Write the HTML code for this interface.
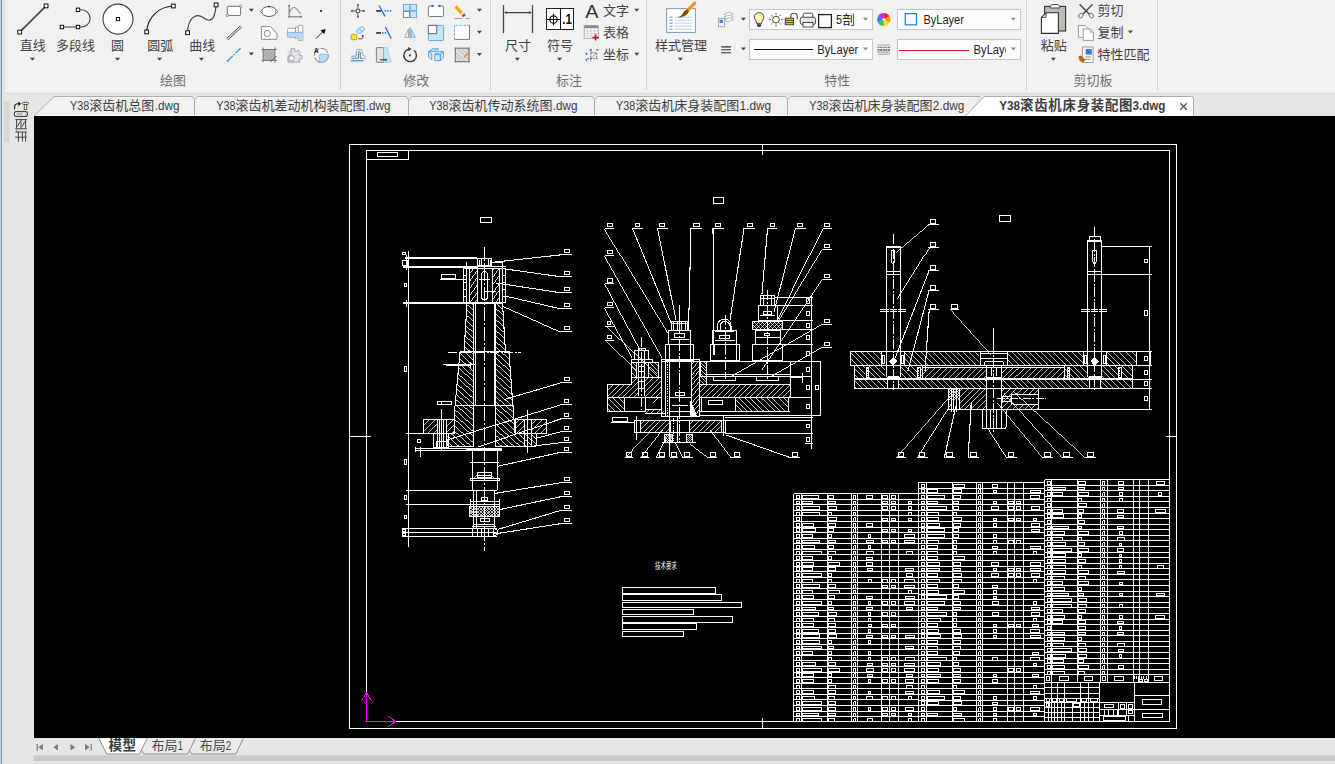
<!DOCTYPE html><html lang="zh-CN"><head><meta charset="utf-8"><title>Y38滚齿机床身装配图3.dwg</title><style>
html,body{margin:0;padding:0;background:#e6e6e6;}
body{width:1335px;height:764px;overflow:hidden;position:relative;font-family:"Liberation Sans","Noto Sans CJK SC",sans-serif;}
#app{position:absolute;left:0;top:0;width:1335px;height:764px;background:#e6e6e6;overflow:hidden;}
#edge{position:absolute;left:0;top:0;width:2px;height:764px;background:#b5d3f3;border-right:1px solid #8b8f94;box-sizing:border-box;}
#ribbon{position:absolute;left:4px;top:0;width:1331px;height:94px;background:#f1f1f1;border-left:1px solid #dcdcdc;border-bottom:1px solid #d9d9d9;box-sizing:border-box;}
#tabbar{position:absolute;left:2px;top:94px;width:1333px;height:22px;background:#e6e6e6;}
#canvas{position:absolute;left:34px;top:116px;width:1301px;height:622.4px;background:#000;}
#status{position:absolute;left:2px;top:738.4px;width:1333px;height:25.6px;background:#e6e6e6;}
svg.ov{position:absolute;left:0;top:0;}
svg text{font-family:"Liberation Sans","Noto Sans CJK SC",sans-serif;}
</style></head><body><div id="app"><div id="edge"></div><div id="ribbon"></div><div id="tabbar"></div><div id="canvas"></div><div id="status"></div><svg class="ov" width="1335" height="764" viewBox="0 0 1335 764"><g id="cad"><g fill="none" stroke="#fff" stroke-width="1" shape-rendering="crispEdges"><path d="M349.5 144.5H1176.5V728.5H349.5ZM366.5 150.5H1169.5V721.5H366.5ZM366.5 150.5H408.5V159.5H366.5ZM377.5 152.5H397.5V156.5H377.5ZM762.5 144.5L762.5 155M762.5 718L762.5 728.5M349.5 436.5L371 436.5M1165.5 436.5L1176.5 436.5M793.5 493.5L918.5 493.5M793.5 499.1L918.5 499.1M793.5 504.7L918.5 504.7M793.5 510.2L918.5 510.2M793.5 515.8L918.5 515.8M793.5 521.4L918.5 521.4M793.5 527L918.5 527M793.5 532.6L918.5 532.6M793.5 538.1L918.5 538.1M793.5 543.7L918.5 543.7M793.5 549.3L918.5 549.3M793.5 554.9L918.5 554.9M793.5 560.4L918.5 560.4M793.5 566L918.5 566M793.5 571.6L918.5 571.6M793.5 577.2L918.5 577.2M793.5 582.8L918.5 582.8M793.5 588.3L918.5 588.3M793.5 593.9L918.5 593.9M793.5 599.5L918.5 599.5M793.5 605.1L918.5 605.1M793.5 610.7L918.5 610.7M793.5 616.2L918.5 616.2M793.5 621.8L918.5 621.8M793.5 627.4L918.5 627.4M793.5 633L918.5 633M793.5 638.6L918.5 638.6M793.5 644.1L918.5 644.1M793.5 649.7L918.5 649.7M793.5 655.3L918.5 655.3M793.5 660.9L918.5 660.9M793.5 666.4L918.5 666.4M793.5 672L918.5 672M793.5 677.6L918.5 677.6M793.5 683.2L918.5 683.2M793.5 688.8L918.5 688.8M793.5 694.3L918.5 694.3M793.5 699.9L918.5 699.9M793.5 705.5L918.5 705.5M793.5 711.1L918.5 711.1M793.5 716.7L918.5 716.7M793.5 493.5L793.5 721.5M801.5 493.5L801.5 721.5M827.5 493.5L827.5 721.5M851.5 493.5L851.5 721.5M857.5 493.5L857.5 721.5M881.5 493.5L881.5 721.5M889.5 493.5L889.5 721.5M898.5 493.5L898.5 721.5M918.5 493.5L918.5 721.5M796.5 495.4H799.9V498.3H796.5ZM802.9 495.4H818.5V498.3H802.9ZM828.5 495.4H833.3V498.3H828.5ZM853.5 499.1L853.5 495.4M853.5 495.4L855.9 495.4M855.9 495.4L855.9 499.1M866.5 495.7H872.5V498.3H866.5ZM882.9 495.7H887.1V498.3H882.9ZM891.1 495.7H895.9V498.3H891.1ZM796.5 501H799.9V503.9H796.5ZM802.9 501H812V503.9H802.9ZM828.5 501H835.7V503.9H828.5ZM853.5 504.7L853.5 501M853.5 501L855.9 501M855.9 501L855.9 504.7M908 501.3H911V503.9H908ZM882.9 501.3H887.1V503.9H882.9ZM891.1 501.3H895.9V503.9H891.1ZM796.5 506.6H799.9V509.5H796.5ZM802.9 506.6H819.8V509.5H802.9ZM828.5 506.6H836.9V509.5H828.5ZM853.5 510.2L853.5 506.6M853.5 506.6L855.9 506.6M855.9 506.6L855.9 510.2M908 506.9H911V509.5H908ZM882.9 506.9H887.1V509.5H882.9ZM891.1 506.9H895.9V509.5H891.1ZM796.5 512.1H799.9V515H796.5ZM802.9 512.1H819.8V515H802.9ZM828.5 512.1H831.4V515H828.5ZM853.5 515.8L853.5 512.1M853.5 512.1L855.9 512.1M855.9 512.1L855.9 515.8M908 512.4H911V515H908ZM796.5 517.7H799.9V520.6H796.5ZM828.5 517.7H836.9V520.6H828.5ZM853.5 521.4L853.5 517.7M853.5 517.7L855.9 517.7M855.9 517.7L855.9 521.4M908 518H911V520.6H908ZM882.9 518H887.1V520.6H882.9ZM891.1 518H895.9V520.6H891.1ZM796.5 523.3H799.9V526.2H796.5ZM802.9 523.3H813.3V526.2H802.9ZM828.5 523.3H835.7V526.2H828.5ZM853.5 527L853.5 523.3M853.5 523.3L855.9 523.3M855.9 523.3L855.9 527M866.5 523.6H872.5V526.2H866.5ZM796.5 528.9H799.9V531.8H796.5ZM802.9 528.9H815.9V531.8H802.9ZM828.5 528.9H833.3V531.8H828.5ZM853.5 532.6L853.5 528.9M853.5 528.9L855.9 528.9M855.9 528.9L855.9 532.6M908 529.2H911V531.8H908ZM882.9 529.2H887.1V531.8H882.9ZM891.1 529.2H895.9V531.8H891.1ZM796.5 534.5H799.9V537.4H796.5ZM802.9 534.5H812V537.4H802.9ZM828.5 534.5H831.4V537.4H828.5ZM853.5 538.1L853.5 534.5M853.5 534.5L855.9 534.5M855.9 534.5L855.9 538.1M868.2 534.8H870.8V537.4H868.2ZM904.5 534.8H914.5V537.4H904.5ZM796.5 540H799.9V542.9H796.5ZM802.9 540H819.8V542.9H802.9ZM828.5 540H835.7V542.9H828.5ZM853.5 543.7L853.5 540M853.5 540L855.9 540M855.9 540L855.9 543.7M866 540.3H873V542.9H866ZM904.5 540.3H914.5V542.9H904.5ZM882.9 540.3H887.1V542.9H882.9ZM891.1 540.3H895.9V542.9H891.1ZM796.5 545.6H799.9V548.5H796.5ZM802.9 545.6H814.6V548.5H802.9ZM828.5 545.6H833.3V548.5H828.5ZM853.5 549.3L853.5 545.6M853.5 545.6L855.9 545.6M855.9 545.6L855.9 549.3M868.2 545.9H870.8V548.5H868.2ZM796.5 551.2H799.9V554.1H796.5ZM802.9 551.2H821.6V554.1H802.9ZM828.5 551.2H835.7V554.1H828.5ZM853.5 554.9L853.5 551.2M853.5 551.2L855.9 551.2M855.9 551.2L855.9 554.9M866 551.5H873V554.1H866ZM906.5 551.5H912.5V554.1H906.5ZM796.5 556.8H799.9V559.7H796.5ZM802.9 556.8H812V559.7H802.9ZM828.5 556.8H831.4V559.7H828.5ZM853.5 560.4L853.5 556.8M853.5 556.8L855.9 556.8M855.9 556.8L855.9 560.4M866.5 557.1H872.5V559.7H866.5ZM796.5 562.3H799.9V565.2H796.5ZM802.9 562.3H813.3V565.2H802.9ZM828.5 562.3H839.3V565.2H828.5ZM853.5 566L853.5 562.3M853.5 562.3L855.9 562.3M855.9 562.3L855.9 566M866.5 562.6H872.5V565.2H866.5ZM796.5 567.9H799.9V570.8H796.5ZM802.9 567.9H812V570.8H802.9ZM828.5 567.9H835.7V570.8H828.5ZM853.5 571.6L853.5 567.9M853.5 567.9L855.9 567.9M855.9 567.9L855.9 571.6M867 568.2H872V570.8H867ZM905.5 568.2H913.5V570.8H905.5ZM796.5 573.5H799.9V576.4H796.5ZM802.9 573.5H821.6V576.4H802.9ZM828.5 573.5H831.4V576.4H828.5ZM853.5 577.2L853.5 573.5M853.5 573.5L855.9 573.5M855.9 573.5L855.9 577.2M906.5 573.8H912.5V576.4H906.5ZM796.5 579.1H799.9V582H796.5ZM802.9 579.1H812V582H802.9ZM828.5 579.1H831.4V582H828.5ZM853.5 582.8L853.5 579.1M853.5 579.1L855.9 579.1M855.9 579.1L855.9 582.8M868 579.4H871V582H868ZM904.5 579.4H914.5V582H904.5ZM882.9 579.4H887.1V582H882.9ZM891.1 579.4H895.9V582H891.1ZM796.5 584.7H799.9V587.6H796.5ZM802.9 584.7H819.8V587.6H802.9ZM828.5 584.7H835.7V587.6H828.5ZM853.5 588.3L853.5 584.7M853.5 584.7L855.9 584.7M855.9 584.7L855.9 588.3M904.5 585H914.5V587.6H904.5ZM882.9 585H887.1V587.6H882.9ZM891.1 585H895.9V587.6H891.1ZM796.5 590.2H799.9V593.1H796.5ZM802.9 590.2H812V593.1H802.9ZM828.5 590.2H839.3V593.1H828.5ZM853.5 593.9L853.5 590.2M853.5 590.2L855.9 590.2M855.9 590.2L855.9 593.9M908 590.5H911V593.1H908ZM796.5 595.8H799.9V598.7H796.5ZM802.9 595.8H813.3V598.7H802.9ZM828.5 595.8H834.5V598.7H828.5ZM853.5 599.5L853.5 595.8M853.5 595.8L855.9 595.8M855.9 595.8L855.9 599.5M866.5 596.1H872.5V598.7H866.5ZM905 596.1H914V598.7H905ZM796.5 601.4H799.9V604.3H796.5ZM802.9 601.4H821.6V604.3H802.9ZM828.5 601.4H831.4V604.3H828.5ZM853.5 605.1L853.5 601.4M853.5 601.4L855.9 601.4M855.9 601.4L855.9 605.1M868.2 601.7H870.8V604.3H868.2ZM904.5 601.7H914.5V604.3H904.5ZM882.9 601.7H887.1V604.3H882.9ZM891.1 601.7H895.9V604.3H891.1ZM796.5 607H799.9V609.9H796.5ZM802.9 607H815.9V609.9H802.9ZM828.5 607H833.3V609.9H828.5ZM853.5 610.7L853.5 607M853.5 607L855.9 607M855.9 607L855.9 610.7M866.5 607.3H872.5V609.9H866.5ZM906.5 607.3H912.5V609.9H906.5ZM796.5 612.6H799.9V615.5H796.5ZM802.9 612.6H818.5V615.5H802.9ZM828.5 612.6H836.9V615.5H828.5ZM853.5 616.2L853.5 612.6M853.5 612.6L855.9 612.6M855.9 612.6L855.9 616.2M868.2 612.9H870.8V615.5H868.2ZM882.9 612.9H887.1V615.5H882.9ZM891.1 612.9H895.9V615.5H891.1ZM796.5 618.1H799.9V621H796.5ZM802.9 618.1H813.3V621H802.9ZM828.5 618.1H834.5V621H828.5ZM853.5 621.8L853.5 618.1M853.5 618.1L855.9 618.1M855.9 618.1L855.9 621.8M868.2 618.4H870.8V621H868.2ZM796.5 623.7H799.9V626.6H796.5ZM802.9 623.7H813.3V626.6H802.9ZM828.5 623.7H835.7V626.6H828.5ZM853.5 627.4L853.5 623.7M853.5 623.7L855.9 623.7M855.9 623.7L855.9 627.4M868 624H871V626.6H868ZM882.9 624H887.1V626.6H882.9ZM891.1 624H895.9V626.6H891.1ZM796.5 629.3H799.9V632.2H796.5ZM802.9 629.3H818.5V632.2H802.9ZM828.5 629.3H835.7V632.2H828.5ZM853.5 633L853.5 629.3M853.5 629.3L855.9 629.3M855.9 629.3L855.9 633M868.2 629.6H870.8V632.2H868.2ZM796.5 634.9H799.9V637.8H796.5ZM802.9 634.9H819.8V637.8H802.9ZM828.5 634.9H836.9V637.8H828.5ZM853.5 638.6L853.5 634.9M853.5 634.9L855.9 634.9M855.9 634.9L855.9 638.6M866.5 635.2H872.5V637.8H866.5ZM905 635.2H914V637.8H905ZM882.9 635.2H887.1V637.8H882.9ZM891.1 635.2H895.9V637.8H891.1ZM796.5 640.5H799.9V643.4H796.5ZM802.9 640.5H819.8V643.4H802.9ZM828.5 640.5H831.4V643.4H828.5ZM853.5 644.1L853.5 640.5M853.5 640.5L855.9 640.5M855.9 640.5L855.9 644.1M868.2 640.8H870.8V643.4H868.2ZM796.5 646H799.9V648.9H796.5ZM802.9 646H821.6V648.9H802.9ZM828.5 646H833.3V648.9H828.5ZM853.5 649.7L853.5 646M853.5 646L855.9 646M855.9 646L855.9 649.7M905.5 646.3H913.5V648.9H905.5ZM796.5 651.6H799.9V654.5H796.5ZM802.9 651.6H812V654.5H802.9ZM828.5 651.6H831.4V654.5H828.5ZM853.5 655.3L853.5 651.6M853.5 651.6L855.9 651.6M855.9 651.6L855.9 655.3M868.2 651.9H870.8V654.5H868.2ZM796.5 657.2H799.9V660.1H796.5ZM828.5 657.2H831.4V660.1H828.5ZM853.5 660.9L853.5 657.2M853.5 657.2L855.9 657.2M855.9 657.2L855.9 660.9M868.2 657.5H870.8V660.1H868.2ZM905 657.5H914V660.1H905ZM882.9 657.5H887.1V660.1H882.9ZM891.1 657.5H895.9V660.1H891.1ZM796.5 662.8H799.9V665.7H796.5ZM802.9 662.8H815.9V665.7H802.9ZM828.5 662.8H835.7V665.7H828.5ZM853.5 666.4L853.5 662.8M853.5 662.8L855.9 662.8M855.9 662.8L855.9 666.4M867 663.1H872V665.7H867ZM904.5 663.1H914.5V665.7H904.5ZM882.9 663.1H887.1V665.7H882.9ZM891.1 663.1H895.9V665.7H891.1ZM796.5 668.3H799.9V671.2H796.5ZM802.9 668.3H821.6V671.2H802.9ZM828.5 668.3H839.3V671.2H828.5ZM853.5 672L853.5 668.3M853.5 668.3L855.9 668.3M855.9 668.3L855.9 672M866 668.6H873V671.2H866ZM904.5 668.6H914.5V671.2H904.5ZM882.9 668.6H887.1V671.2H882.9ZM891.1 668.6H895.9V671.2H891.1ZM796.5 673.9H799.9V676.8H796.5ZM802.9 673.9H813.3V676.8H802.9ZM828.5 673.9H831.4V676.8H828.5ZM853.5 677.6L853.5 673.9M853.5 673.9L855.9 673.9M855.9 673.9L855.9 677.6M867 674.2H872V676.8H867ZM906.5 674.2H912.5V676.8H906.5ZM796.5 679.5H799.9V682.4H796.5ZM802.9 679.5H813.3V682.4H802.9ZM828.5 679.5H831.4V682.4H828.5ZM853.5 683.2L853.5 679.5M853.5 679.5L855.9 679.5M855.9 679.5L855.9 683.2M868.2 679.8H870.8V682.4H868.2ZM905.5 679.8H913.5V682.4H905.5ZM882.9 679.8H887.1V682.4H882.9ZM891.1 679.8H895.9V682.4H891.1ZM796.5 685.1H799.9V688H796.5ZM828.5 685.1H835.7V688H828.5ZM853.5 688.8L853.5 685.1M853.5 685.1L855.9 685.1M855.9 685.1L855.9 688.8M906.5 685.4H912.5V688H906.5ZM796.5 690.7H799.9V693.6H796.5ZM802.9 690.7H813.3V693.6H802.9ZM828.5 690.7H835.7V693.6H828.5ZM853.5 694.3L853.5 690.7M853.5 690.7L855.9 690.7M855.9 690.7L855.9 694.3M868.2 691H870.8V693.6H868.2ZM905.5 691H913.5V693.6H905.5ZM796.5 696.2H799.9V699.1H796.5ZM802.9 696.2H814.6V699.1H802.9ZM828.5 696.2H834.5V699.1H828.5ZM853.5 699.9L853.5 696.2M853.5 696.2L855.9 696.2M855.9 696.2L855.9 699.9M866.5 696.5H872.5V699.1H866.5ZM908 696.5H911V699.1H908ZM882.9 696.5H887.1V699.1H882.9ZM891.1 696.5H895.9V699.1H891.1ZM796.5 701.8H799.9V704.7H796.5ZM802.9 701.8H821.6V704.7H802.9ZM828.5 701.8H835.7V704.7H828.5ZM853.5 705.5L853.5 701.8M853.5 701.8L855.9 701.8M855.9 701.8L855.9 705.5M796.5 707.4H799.9V710.3H796.5ZM802.9 707.4H821.6V710.3H802.9ZM828.5 707.4H835.7V710.3H828.5ZM853.5 711.1L853.5 707.4M853.5 707.4L855.9 707.4M855.9 707.4L855.9 711.1M868.2 707.7H870.8V710.3H868.2ZM905.5 707.7H913.5V710.3H905.5ZM882.9 707.7H887.1V710.3H882.9ZM891.1 707.7H895.9V710.3H891.1ZM796.5 713H799.9V715.9H796.5ZM802.9 713H818.5V715.9H802.9ZM828.5 713H835.7V715.9H828.5ZM853.5 716.7L853.5 713M853.5 713L855.9 713M855.9 713L855.9 716.7M908 713.3H911V715.9H908ZM882.9 713.3H887.1V715.9H882.9ZM891.1 713.3H895.9V715.9H891.1ZM796.5 718.6H799.9V721.5H796.5ZM802.9 718.6H821.6V721.5H802.9ZM828.5 718.6H834.5V721.5H828.5ZM853.5 722.2L853.5 718.6M853.5 718.6L855.9 718.6M855.9 718.6L855.9 722.2M867 718.9H872V721.5H867ZM908 718.9H911V721.5H908ZM918.5 482.4L1044.5 482.4M918.5 488L1044.5 488M918.5 493.6L1044.5 493.6M918.5 499.1L1044.5 499.1M918.5 504.7L1044.5 504.7M918.5 510.3L1044.5 510.3M918.5 515.9L1044.5 515.9M918.5 521.5L1044.5 521.5M918.5 527L1044.5 527M918.5 532.6L1044.5 532.6M918.5 538.2L1044.5 538.2M918.5 543.8L1044.5 543.8M918.5 549.3L1044.5 549.3M918.5 554.9L1044.5 554.9M918.5 560.5L1044.5 560.5M918.5 566.1L1044.5 566.1M918.5 571.7L1044.5 571.7M918.5 577.2L1044.5 577.2M918.5 582.8L1044.5 582.8M918.5 588.4L1044.5 588.4M918.5 594L1044.5 594M918.5 599.6L1044.5 599.6M918.5 605.1L1044.5 605.1M918.5 610.7L1044.5 610.7M918.5 616.3L1044.5 616.3M918.5 621.9L1044.5 621.9M918.5 627.5L1044.5 627.5M918.5 633L1044.5 633M918.5 638.6L1044.5 638.6M918.5 644.2L1044.5 644.2M918.5 649.8L1044.5 649.8M918.5 655.3L1044.5 655.3M918.5 660.9L1044.5 660.9M918.5 666.5L1044.5 666.5M918.5 672.1L1044.5 672.1M918.5 677.7L1044.5 677.7M918.5 683.2L1044.5 683.2M918.5 688.8L1044.5 688.8M918.5 694.4L1044.5 694.4M918.5 700L1044.5 700M918.5 705.6L1044.5 705.6M918.5 711.1L1044.5 711.1M918.5 716.7L1044.5 716.7M918.5 482.4L918.5 721.5M926.5 482.4L926.5 721.5M952.5 482.4L952.5 721.5M976.5 482.4L976.5 721.5M982.5 482.4L982.5 721.5M1007.5 482.4L1007.5 721.5M1014.5 482.4L1014.5 721.5M1023.5 482.4L1023.5 721.5M1044.5 482.4L1044.5 721.5M921.5 484.3H924.9V487.2H921.5ZM953.5 484.3H964.3V487.2H953.5ZM978.5 488L978.5 484.3M978.5 484.3L980.9 484.3M980.9 484.3L980.9 488M992.5 484.6H997.5V487.2H992.5ZM921.5 489.9H924.9V492.8H921.5ZM927.9 489.9H937V492.8H927.9ZM953.5 489.9H961.9V492.8H953.5ZM978.5 493.6L978.5 489.9M978.5 489.9L980.9 489.9M980.9 489.9L980.9 493.6M993.7 490.2H996.3V492.8H993.7ZM1030 490.2H1040V492.8H1030ZM921.5 495.5H924.9V498.4H921.5ZM927.9 495.5H944.8V498.4H927.9ZM953.5 495.5H960.7V498.4H953.5ZM978.5 499.1L978.5 495.5M978.5 495.5L980.9 495.5M980.9 495.5L980.9 499.1M1030.5 495.8H1039.5V498.4H1030.5ZM921.5 501H924.9V503.9H921.5ZM927.9 501H937V503.9H927.9ZM953.5 501H958.3V503.9H953.5ZM978.5 504.7L978.5 501M978.5 501L980.9 501M980.9 501L980.9 504.7M993.7 501.3H996.3V503.9H993.7ZM1008.9 501.3H1013.1V503.9H1008.9ZM1016.1 501.3H1020.9V503.9H1016.1ZM921.5 506.6H924.9V509.5H921.5ZM927.9 506.6H946.6V509.5H927.9ZM953.5 506.6H958.3V509.5H953.5ZM978.5 510.3L978.5 506.6M978.5 506.6L980.9 506.6M980.9 506.6L980.9 510.3M991.5 506.9H998.5V509.5H991.5ZM1031 506.9H1039V509.5H1031ZM1008.9 506.9H1013.1V509.5H1008.9ZM1016.1 506.9H1020.9V509.5H1016.1ZM921.5 512.2H924.9V515.1H921.5ZM927.9 512.2H938.3V515.1H927.9ZM953.5 512.2H956.4V515.1H953.5ZM978.5 515.9L978.5 512.2M978.5 512.2L980.9 512.2M980.9 512.2L980.9 515.9M921.5 517.8H924.9V520.7H921.5ZM927.9 517.8H938.3V520.7H927.9ZM953.5 517.8H961.9V520.7H953.5ZM978.5 521.5L978.5 517.8M978.5 517.8L980.9 517.8M980.9 517.8L980.9 521.5M993.7 518.1H996.3V520.7H993.7ZM1033.5 518.1H1036.5V520.7H1033.5ZM1008.9 518.1H1013.1V520.7H1008.9ZM1016.1 518.1H1020.9V520.7H1016.1ZM921.5 523.4H924.9V526.3H921.5ZM927.9 523.4H939.6V526.3H927.9ZM953.5 523.4H960.7V526.3H953.5ZM978.5 527L978.5 523.4M978.5 523.4L980.9 523.4M980.9 523.4L980.9 527M993.7 523.7H996.3V526.3H993.7ZM1031 523.7H1039V526.3H1031ZM921.5 528.9H924.9V531.8H921.5ZM927.9 528.9H944.8V531.8H927.9ZM953.5 528.9H958.3V531.8H953.5ZM978.5 532.6L978.5 528.9M978.5 528.9L980.9 528.9M980.9 528.9L980.9 532.6M1031 529.2H1039V531.8H1031ZM921.5 534.5H924.9V537.4H921.5ZM927.9 534.5H944.8V537.4H927.9ZM953.5 534.5H958.3V537.4H953.5ZM978.5 538.2L978.5 534.5M978.5 534.5L980.9 534.5M980.9 534.5L980.9 538.2M993.7 534.8H996.3V537.4H993.7ZM921.5 540.1H924.9V543H921.5ZM927.9 540.1H938.3V543H927.9ZM953.5 540.1H956.4V543H953.5ZM978.5 543.8L978.5 540.1M978.5 540.1L980.9 540.1M980.9 540.1L980.9 543.8M993.7 540.4H996.3V543H993.7ZM1008.9 540.4H1013.1V543H1008.9ZM1016.1 540.4H1020.9V543H1016.1ZM921.5 545.7H924.9V548.6H921.5ZM927.9 545.7H937V548.6H927.9ZM953.5 545.7H956.4V548.6H953.5ZM978.5 549.3L978.5 545.7M978.5 545.7L980.9 545.7M980.9 545.7L980.9 549.3M992.5 546H997.5V548.6H992.5ZM1030 546H1040V548.6H1030ZM921.5 551.2H924.9V554.1H921.5ZM927.9 551.2H937V554.1H927.9ZM953.5 551.2H956.4V554.1H953.5ZM978.5 554.9L978.5 551.2M978.5 551.2L980.9 551.2M980.9 551.2L980.9 554.9M993.7 551.5H996.3V554.1H993.7ZM1033.5 551.5H1036.5V554.1H1033.5ZM921.5 556.8H924.9V559.7H921.5ZM927.9 556.8H937V559.7H927.9ZM953.5 556.8H964.3V559.7H953.5ZM978.5 560.5L978.5 556.8M978.5 556.8L980.9 556.8M980.9 556.8L980.9 560.5M921.5 562.4H924.9V565.3H921.5ZM927.9 562.4H939.6V565.3H927.9ZM953.5 562.4H960.7V565.3H953.5ZM978.5 566.1L978.5 562.4M978.5 562.4L980.9 562.4M980.9 562.4L980.9 566.1M991.5 562.7H998.5V565.3H991.5ZM1030 562.7H1040V565.3H1030ZM921.5 568H924.9V570.9H921.5ZM927.9 568H939.6V570.9H927.9ZM953.5 568H960.7V570.9H953.5ZM978.5 571.7L978.5 568M978.5 568L980.9 568M980.9 568L980.9 571.7M993.7 568.3H996.3V570.9H993.7ZM1030 568.3H1040V570.9H1030ZM1008.9 568.3H1013.1V570.9H1008.9ZM1016.1 568.3H1020.9V570.9H1016.1ZM921.5 573.6H924.9V576.5H921.5ZM927.9 573.6H937V576.5H927.9ZM953.5 573.6H961.9V576.5H953.5ZM978.5 577.2L978.5 573.6M978.5 573.6L980.9 573.6M980.9 573.6L980.9 577.2M991.5 573.9H998.5V576.5H991.5ZM1031 573.9H1039V576.5H1031ZM1008.9 573.9H1013.1V576.5H1008.9ZM1016.1 573.9H1020.9V576.5H1016.1ZM921.5 579.1H924.9V582H921.5ZM927.9 579.1H939.6V582H927.9ZM953.5 579.1H961.9V582H953.5ZM978.5 582.8L978.5 579.1M978.5 579.1L980.9 579.1M980.9 579.1L980.9 582.8M1033.5 579.4H1036.5V582H1033.5ZM921.5 584.7H924.9V587.6H921.5ZM927.9 584.7H937V587.6H927.9ZM953.5 584.7H958.3V587.6H953.5ZM978.5 588.4L978.5 584.7M978.5 584.7L980.9 584.7M980.9 584.7L980.9 588.4M992.5 585H997.5V587.6H992.5ZM921.5 590.3H924.9V593.2H921.5ZM927.9 590.3H938.3V593.2H927.9ZM953.5 590.3H964.3V593.2H953.5ZM978.5 594L978.5 590.3M978.5 590.3L980.9 590.3M980.9 590.3L980.9 594M993.7 590.6H996.3V593.2H993.7ZM921.5 595.9H924.9V598.8H921.5ZM927.9 595.9H946.6V598.8H927.9ZM953.5 595.9H958.3V598.8H953.5ZM978.5 599.6L978.5 595.9M978.5 595.9L980.9 595.9M980.9 595.9L980.9 599.6M993.7 596.2H996.3V598.8H993.7ZM921.5 601.5H924.9V604.4H921.5ZM927.9 601.5H944.8V604.4H927.9ZM953.5 601.5H960.7V604.4H953.5ZM978.5 605.1L978.5 601.5M978.5 601.5L980.9 601.5M980.9 601.5L980.9 605.1M992 601.8H998V604.4H992ZM1033.5 601.8H1036.5V604.4H1033.5ZM921.5 607H924.9V609.9H921.5ZM927.9 607H937V609.9H927.9ZM953.5 607H960.7V609.9H953.5ZM978.5 610.7L978.5 607M978.5 607L980.9 607M980.9 607L980.9 610.7M1031 607.3H1039V609.9H1031ZM921.5 612.6H924.9V615.5H921.5ZM927.9 612.6H946.6V615.5H927.9ZM953.5 612.6H956.4V615.5H953.5ZM978.5 616.3L978.5 612.6M978.5 612.6L980.9 612.6M980.9 612.6L980.9 616.3M992 612.9H998V615.5H992ZM1031 612.9H1039V615.5H1031ZM921.5 618.2H924.9V621.1H921.5ZM927.9 618.2H940.9V621.1H927.9ZM953.5 618.2H956.4V621.1H953.5ZM978.5 621.9L978.5 618.2M978.5 618.2L980.9 618.2M980.9 618.2L980.9 621.9M1033.5 618.5H1036.5V621.1H1033.5ZM921.5 623.8H924.9V626.7H921.5ZM927.9 623.8H937V626.7H927.9ZM953.5 623.8H956.4V626.7H953.5ZM978.5 627.5L978.5 623.8M978.5 623.8L980.9 623.8M980.9 623.8L980.9 627.5M993.5 624.1H996.5V626.7H993.5ZM1032 624.1H1038V626.7H1032ZM1008.9 624.1H1013.1V626.7H1008.9ZM1016.1 624.1H1020.9V626.7H1016.1ZM921.5 629.4H924.9V632.3H921.5ZM927.9 629.4H938.3V632.3H927.9ZM953.5 629.4H960.7V632.3H953.5ZM978.5 633L978.5 629.4M978.5 629.4L980.9 629.4M980.9 629.4L980.9 633M993.7 629.7H996.3V632.3H993.7ZM1030.5 629.7H1039.5V632.3H1030.5ZM921.5 634.9H924.9V637.8H921.5ZM927.9 634.9H940.9V637.8H927.9ZM953.5 634.9H961.9V637.8H953.5ZM978.5 638.6L978.5 634.9M978.5 634.9L980.9 634.9M980.9 634.9L980.9 638.6M993.7 635.2H996.3V637.8H993.7ZM1030 635.2H1040V637.8H1030ZM921.5 640.5H924.9V643.4H921.5ZM927.9 640.5H937V643.4H927.9ZM953.5 640.5H960.7V643.4H953.5ZM978.5 644.2L978.5 640.5M978.5 640.5L980.9 640.5M980.9 640.5L980.9 644.2M921.5 646.1H924.9V649H921.5ZM927.9 646.1H937V649H927.9ZM953.5 646.1H960.7V649H953.5ZM978.5 649.8L978.5 646.1M978.5 646.1L980.9 646.1M980.9 646.1L980.9 649.8M921.5 651.7H924.9V654.6H921.5ZM927.9 651.7H937V654.6H927.9ZM953.5 651.7H959.5V654.6H953.5ZM978.5 655.3L978.5 651.7M978.5 651.7L980.9 651.7M980.9 651.7L980.9 655.3M1032 652H1038V654.6H1032ZM921.5 657.2H924.9V660.1H921.5ZM927.9 657.2H946.6V660.1H927.9ZM953.5 657.2H956.4V660.1H953.5ZM978.5 660.9L978.5 657.2M978.5 657.2L980.9 657.2M980.9 657.2L980.9 660.9M992.5 657.5H997.5V660.1H992.5ZM1030.5 657.5H1039.5V660.1H1030.5ZM921.5 662.8H924.9V665.7H921.5ZM927.9 662.8H940.9V665.7H927.9ZM953.5 662.8H958.3V665.7H953.5ZM978.5 666.5L978.5 662.8M978.5 662.8L980.9 662.8M980.9 662.8L980.9 666.5M1033.5 663.1H1036.5V665.7H1033.5ZM921.5 668.4H924.9V671.3H921.5ZM927.9 668.4H938.3V671.3H927.9ZM953.5 668.4H960.7V671.3H953.5ZM978.5 672.1L978.5 668.4M978.5 668.4L980.9 668.4M980.9 668.4L980.9 672.1M1008.9 668.7H1013.1V671.3H1008.9ZM1016.1 668.7H1020.9V671.3H1016.1ZM921.5 674H924.9V676.9H921.5ZM927.9 674H940.9V676.9H927.9ZM953.5 674H960.7V676.9H953.5ZM978.5 677.7L978.5 674M978.5 674L980.9 674M980.9 674L980.9 677.7M993.7 674.3H996.3V676.9H993.7ZM1032 674.3H1038V676.9H1032ZM921.5 679.6H924.9V682.5H921.5ZM927.9 679.6H938.3V682.5H927.9ZM953.5 679.6H960.7V682.5H953.5ZM978.5 683.2L978.5 679.6M978.5 679.6L980.9 679.6M980.9 679.6L980.9 683.2M992.5 679.9H997.5V682.5H992.5ZM921.5 685.1H924.9V688H921.5ZM953.5 685.1H956.4V688H953.5ZM978.5 688.8L978.5 685.1M978.5 685.1L980.9 685.1M980.9 685.1L980.9 688.8M1033.5 685.4H1036.5V688H1033.5ZM921.5 690.7H924.9V693.6H921.5ZM927.9 690.7H939.6V693.6H927.9ZM953.5 690.7H964.3V693.6H953.5ZM978.5 694.4L978.5 690.7M978.5 690.7L980.9 690.7M980.9 690.7L980.9 694.4M1030.5 691H1039.5V693.6H1030.5ZM921.5 696.3H924.9V699.2H921.5ZM927.9 696.3H944.8V699.2H927.9ZM953.5 696.3H960.7V699.2H953.5ZM978.5 700L978.5 696.3M978.5 696.3L980.9 696.3M980.9 696.3L980.9 700M993.7 696.6H996.3V699.2H993.7ZM1033.5 696.6H1036.5V699.2H1033.5ZM921.5 701.9H924.9V704.8H921.5ZM927.9 701.9H938.3V704.8H927.9ZM953.5 701.9H961.9V704.8H953.5ZM978.5 705.6L978.5 701.9M978.5 701.9L980.9 701.9M980.9 701.9L980.9 705.6M992.5 702.2H997.5V704.8H992.5ZM921.5 707.5H924.9V710.4H921.5ZM953.5 707.5H956.4V710.4H953.5ZM978.5 711.1L978.5 707.5M978.5 707.5L980.9 707.5M980.9 707.5L980.9 711.1M993.5 707.8H996.5V710.4H993.5ZM1030.5 707.8H1039.5V710.4H1030.5ZM1008.9 707.8H1013.1V710.4H1008.9ZM1016.1 707.8H1020.9V710.4H1016.1ZM921.5 713H924.9V715.9H921.5ZM927.9 713H937V715.9H927.9ZM953.5 713H961.9V715.9H953.5ZM978.5 716.7L978.5 713M978.5 713L980.9 713M980.9 713L980.9 716.7M993.5 713.3H996.5V715.9H993.5ZM1033.5 713.3H1036.5V715.9H1033.5ZM921.5 718.6H924.9V721.5H921.5ZM953.5 718.6H964.3V721.5H953.5ZM978.5 722.3L978.5 718.6M978.5 718.6L980.9 718.6M980.9 718.6L980.9 722.3M993.7 718.9H996.3V721.5H993.7ZM1044.5 479.5L1169.5 479.5M1044.5 485.1L1169.5 485.1M1044.5 490.7L1169.5 490.7M1044.5 496.2L1169.5 496.2M1044.5 501.8L1169.5 501.8M1044.5 507.4L1169.5 507.4M1044.5 513L1169.5 513M1044.5 518.6L1169.5 518.6M1044.5 524.1L1169.5 524.1M1044.5 529.7L1169.5 529.7M1044.5 535.3L1169.5 535.3M1044.5 540.9L1169.5 540.9M1044.5 546.4L1169.5 546.4M1044.5 552L1169.5 552M1044.5 557.6L1169.5 557.6M1044.5 563.2L1169.5 563.2M1044.5 568.8L1169.5 568.8M1044.5 574.3L1169.5 574.3M1044.5 579.9L1169.5 579.9M1044.5 585.5L1169.5 585.5M1044.5 591.1L1169.5 591.1M1044.5 596.7L1169.5 596.7M1044.5 602.2L1169.5 602.2M1044.5 607.8L1169.5 607.8M1044.5 613.4L1169.5 613.4M1044.5 619L1169.5 619M1044.5 624.6L1169.5 624.6M1044.5 630.1L1169.5 630.1M1044.5 635.7L1169.5 635.7M1044.5 641.3L1169.5 641.3M1044.5 646.9L1169.5 646.9M1044.5 652.4L1169.5 652.4M1044.5 658L1169.5 658M1044.5 663.6L1169.5 663.6M1044.5 669.2L1169.5 669.2M1044.5 479.5L1044.5 674.8M1051.5 479.5L1051.5 674.8M1077.5 479.5L1077.5 674.8M1100.5 479.5L1100.5 674.8M1107.5 479.5L1107.5 674.8M1133.5 479.5L1133.5 674.8M1139.5 479.5L1139.5 674.8M1148.5 479.5L1148.5 674.8M1169.5 479.5L1169.5 674.8M1047.5 481.4H1050.9V484.3H1047.5ZM1078.5 481.4H1085.4V484.3H1078.5ZM1102.5 485.1L1102.5 481.4M1102.5 481.4L1104.9 481.4M1104.9 481.4L1104.9 485.1M1118 481.7H1123V484.3H1118ZM1156 481.7H1164V484.3H1156ZM1047.5 487H1050.9V489.9H1047.5ZM1052.9 487H1065.9V489.9H1052.9ZM1078.5 487H1084.2V489.9H1078.5ZM1102.5 490.7L1102.5 487M1102.5 487L1104.9 487M1104.9 487L1104.9 490.7M1118 487.3H1123V489.9H1118ZM1047.5 492.6H1050.9V495.5H1047.5ZM1052.9 492.6H1062V495.5H1052.9ZM1078.5 492.6H1088.8V495.5H1078.5ZM1102.5 496.2L1102.5 492.6M1102.5 492.6L1104.9 492.6M1104.9 492.6L1104.9 496.2M1119 492.9H1122V495.5H1119ZM1158.5 492.9H1161.5V495.5H1158.5ZM1047.5 498.1H1050.9V501H1047.5ZM1078.5 498.1H1081.3V501H1078.5ZM1102.5 501.8L1102.5 498.1M1102.5 498.1L1104.9 498.1M1104.9 498.1L1104.9 501.8M1119 498.4H1122V501H1119ZM1047.5 503.7H1050.9V506.6H1047.5ZM1078.5 503.7H1086.5V506.6H1078.5ZM1102.5 507.4L1102.5 503.7M1102.5 503.7L1104.9 503.7M1104.9 503.7L1104.9 507.4M1047.5 509.3H1050.9V512.2H1047.5ZM1052.9 509.3H1062V512.2H1052.9ZM1078.5 509.3H1083.1V512.2H1078.5ZM1102.5 513L1102.5 509.3M1102.5 509.3L1104.9 509.3M1104.9 509.3L1104.9 513M1117.5 509.6H1123.5V512.2H1117.5ZM1155 509.6H1165V512.2H1155ZM1047.5 514.9H1050.9V517.8H1047.5ZM1052.9 514.9H1063.3V517.8H1052.9ZM1078.5 514.9H1081.3V517.8H1078.5ZM1102.5 518.6L1102.5 514.9M1102.5 514.9L1104.9 514.9M1104.9 514.9L1104.9 518.6M1117.5 515.2H1123.5V517.8H1117.5ZM1047.5 520.5H1050.9V523.4H1047.5ZM1078.5 520.5H1084.2V523.4H1078.5ZM1102.5 524.1L1102.5 520.5M1102.5 520.5L1104.9 520.5M1104.9 520.5L1104.9 524.1M1047.5 526H1050.9V528.9H1047.5ZM1052.9 526H1068.5V528.9H1052.9ZM1078.5 526H1081.3V528.9H1078.5ZM1102.5 529.7L1102.5 526M1102.5 526L1104.9 526M1104.9 526L1104.9 529.7M1117.5 526.3H1123.5V528.9H1117.5ZM1047.5 531.6H1050.9V534.5H1047.5ZM1052.9 531.6H1064.6V534.5H1052.9ZM1078.5 531.6H1088.8V534.5H1078.5ZM1102.5 535.3L1102.5 531.6M1102.5 531.6L1104.9 531.6M1104.9 531.6L1104.9 535.3M1119 531.9H1122V534.5H1119ZM1047.5 537.2H1050.9V540.1H1047.5ZM1052.9 537.2H1062V540.1H1052.9ZM1078.5 537.2H1081.3V540.1H1078.5ZM1102.5 540.9L1102.5 537.2M1102.5 537.2L1104.9 537.2M1104.9 537.2L1104.9 540.9M1117 537.5H1124V540.1H1117ZM1047.5 542.8H1050.9V545.7H1047.5ZM1052.9 542.8H1065.9V545.7H1052.9ZM1078.5 542.8H1084.2V545.7H1078.5ZM1102.5 546.4L1102.5 542.8M1102.5 542.8L1104.9 542.8M1104.9 542.8L1104.9 546.4M1119.2 543.1H1121.8V545.7H1119.2ZM1047.5 548.3H1050.9V551.2H1047.5ZM1052.9 548.3H1071.6V551.2H1052.9ZM1078.5 548.3H1088.8V551.2H1078.5ZM1102.5 552L1102.5 548.3M1102.5 548.3L1104.9 548.3M1104.9 548.3L1104.9 552M1117.5 548.6H1123.5V551.2H1117.5ZM1047.5 553.9H1050.9V556.8H1047.5ZM1052.9 553.9H1065.9V556.8H1052.9ZM1078.5 553.9H1081.3V556.8H1078.5ZM1102.5 557.6L1102.5 553.9M1102.5 553.9L1104.9 553.9M1104.9 553.9L1104.9 557.6M1119.2 554.2H1121.8V556.8H1119.2ZM1047.5 559.5H1050.9V562.4H1047.5ZM1052.9 559.5H1065.9V562.4H1052.9ZM1078.5 559.5H1085.4V562.4H1078.5ZM1102.5 563.2L1102.5 559.5M1102.5 559.5L1104.9 559.5M1104.9 559.5L1104.9 563.2M1119.2 559.8H1121.8V562.4H1119.2ZM1047.5 565.1H1050.9V568H1047.5ZM1052.9 565.1H1065.9V568H1052.9ZM1078.5 565.1H1081.3V568H1078.5ZM1102.5 568.8L1102.5 565.1M1102.5 565.1L1104.9 565.1M1104.9 565.1L1104.9 568.8M1119.2 565.4H1121.8V568H1119.2ZM1157 565.4H1163V568H1157ZM1047.5 570.7H1050.9V573.6H1047.5ZM1052.9 570.7H1065.9V573.6H1052.9ZM1078.5 570.7H1088.8V573.6H1078.5ZM1102.5 574.3L1102.5 570.7M1102.5 570.7L1104.9 570.7M1104.9 570.7L1104.9 574.3M1117 571H1124V573.6H1117ZM1047.5 576.2H1050.9V579.1H1047.5ZM1052.9 576.2H1064.6V579.1H1052.9ZM1078.5 576.2H1085.4V579.1H1078.5ZM1102.5 579.9L1102.5 576.2M1102.5 576.2L1104.9 576.2M1104.9 576.2L1104.9 579.9M1047.5 581.8H1050.9V584.7H1047.5ZM1052.9 581.8H1062V584.7H1052.9ZM1078.5 581.8H1088.8V584.7H1078.5ZM1102.5 585.5L1102.5 581.8M1102.5 581.8L1104.9 581.8M1104.9 581.8L1104.9 585.5M1119 582.1H1122V584.7H1119ZM1047.5 587.4H1050.9V590.3H1047.5ZM1052.9 587.4H1064.6V590.3H1052.9ZM1078.5 587.4H1081.3V590.3H1078.5ZM1102.5 591.1L1102.5 587.4M1102.5 587.4L1104.9 587.4M1104.9 587.4L1104.9 591.1M1047.5 593H1050.9V595.9H1047.5ZM1052.9 593H1068.5V595.9H1052.9ZM1078.5 593H1083.1V595.9H1078.5ZM1102.5 596.7L1102.5 593M1102.5 593L1104.9 593M1104.9 593L1104.9 596.7M1119 593.3H1122V595.9H1119ZM1156 593.3H1164V595.9H1156ZM1047.5 598.6H1050.9V601.5H1047.5ZM1052.9 598.6H1071.6V601.5H1052.9ZM1078.5 598.6H1086.5V601.5H1078.5ZM1102.5 602.2L1102.5 598.6M1102.5 598.6L1104.9 598.6M1104.9 598.6L1104.9 602.2M1047.5 604.1H1050.9V607H1047.5ZM1052.9 604.1H1071.6V607H1052.9ZM1078.5 604.1H1086.5V607H1078.5ZM1102.5 607.8L1102.5 604.1M1102.5 604.1L1104.9 604.1M1104.9 604.1L1104.9 607.8M1119 604.4H1122V607H1119ZM1047.5 609.7H1050.9V612.6H1047.5ZM1052.9 609.7H1062V612.6H1052.9ZM1078.5 609.7H1085.4V612.6H1078.5ZM1102.5 613.4L1102.5 609.7M1102.5 609.7L1104.9 609.7M1104.9 609.7L1104.9 613.4M1047.5 615.3H1050.9V618.2H1047.5ZM1052.9 615.3H1064.6V618.2H1052.9ZM1078.5 615.3H1081.3V618.2H1078.5ZM1102.5 619L1102.5 615.3M1102.5 615.3L1104.9 615.3M1104.9 615.3L1104.9 619M1119 615.6H1122V618.2H1119ZM1155.5 615.6H1164.5V618.2H1155.5ZM1047.5 620.9H1050.9V623.8H1047.5ZM1052.9 620.9H1062V623.8H1052.9ZM1078.5 620.9H1085.4V623.8H1078.5ZM1102.5 624.6L1102.5 620.9M1102.5 620.9L1104.9 620.9M1104.9 620.9L1104.9 624.6M1117.5 621.2H1123.5V623.8H1117.5ZM1047.5 626.5H1050.9V629.4H1047.5ZM1078.5 626.5H1085.4V629.4H1078.5ZM1102.5 630.1L1102.5 626.5M1102.5 626.5L1104.9 626.5M1104.9 626.5L1104.9 630.1M1119.2 626.8H1121.8V629.4H1119.2ZM1047.5 632H1050.9V634.9H1047.5ZM1052.9 632H1064.6V634.9H1052.9ZM1078.5 632H1085.4V634.9H1078.5ZM1102.5 635.7L1102.5 632M1102.5 632L1104.9 632M1104.9 632L1104.9 635.7M1117.5 632.3H1123.5V634.9H1117.5ZM1047.5 637.6H1050.9V640.5H1047.5ZM1052.9 637.6H1064.6V640.5H1052.9ZM1078.5 637.6H1081.3V640.5H1078.5ZM1102.5 641.3L1102.5 637.6M1102.5 637.6L1104.9 637.6M1104.9 637.6L1104.9 641.3M1047.5 643.2H1050.9V646.1H1047.5ZM1052.9 643.2H1063.3V646.1H1052.9ZM1078.5 643.2H1085.4V646.1H1078.5ZM1102.5 646.9L1102.5 643.2M1102.5 643.2L1104.9 643.2M1104.9 643.2L1104.9 646.9M1117 643.5H1124V646.1H1117ZM1047.5 648.8H1050.9V651.7H1047.5ZM1052.9 648.8H1071.6V651.7H1052.9ZM1078.5 648.8H1086.5V651.7H1078.5ZM1102.5 652.4L1102.5 648.8M1102.5 648.8L1104.9 648.8M1104.9 648.8L1104.9 652.4M1118 649.1H1123V651.7H1118ZM1047.5 654.3H1050.9V657.2H1047.5ZM1052.9 654.3H1065.9V657.2H1052.9ZM1078.5 654.3H1086.5V657.2H1078.5ZM1102.5 658L1102.5 654.3M1102.5 654.3L1104.9 654.3M1104.9 654.3L1104.9 658M1119.2 654.6H1121.8V657.2H1119.2ZM1047.5 659.9H1050.9V662.8H1047.5ZM1052.9 659.9H1063.3V662.8H1052.9ZM1078.5 659.9H1083.1V662.8H1078.5ZM1102.5 663.6L1102.5 659.9M1102.5 659.9L1104.9 659.9M1104.9 659.9L1104.9 663.6M1047.5 665.5H1050.9V668.4H1047.5ZM1052.9 665.5H1064.6V668.4H1052.9ZM1078.5 665.5H1088.8V668.4H1078.5ZM1102.5 669.2L1102.5 665.5M1102.5 665.5L1104.9 665.5M1104.9 665.5L1104.9 669.2M1118 665.8H1123V668.4H1118ZM1047.5 671.1H1050.9V674H1047.5ZM1052.9 671.1H1064.6V674H1052.9ZM1078.5 671.1H1084.2V674H1078.5ZM1102.5 674.8L1102.5 671.1M1102.5 671.1L1104.9 671.1M1104.9 671.1L1104.9 674.8M1044.5 674.8L1169.5 674.8M1044.5 682.5L1169.5 682.5M1044.5 674.8L1044.5 682.5M1051.5 674.8L1051.5 682.5M1077.5 674.8L1077.5 682.5M1100.5 674.8L1100.5 682.5M1107.5 674.8L1107.5 682.5M1133.5 674.8L1133.5 682.5M1139.5 674.8L1139.5 682.5M1148.5 674.8L1148.5 682.5M1169.5 674.8L1169.5 682.5M1046.5 676.8H1049.5V680.6H1046.5ZM1059.5 676.8H1068.5V680.6H1059.5ZM1084.5 676.8H1092.5V680.6H1084.5ZM1102.5 676.8H1105.5V680.6H1102.5ZM1114.5 676.8H1123.5V680.6H1114.5ZM1154.5 676.8H1162.5V680.6H1154.5ZM1134.5 675.5L1134.5 678.5M1136.5 675.5L1136.5 678.5M1138.5 675.5L1138.5 678.5M1141.5 675.5L1141.5 678.5M1143.5 675.5L1143.5 678.5M1146.5 675.5L1146.5 678.5M1138.5 679.5H1142.5V681.5H1138.5ZM1144.5 679.5H1147.5V681.5H1144.5ZM1044.5 687.6L1099.5 687.6M1044.5 693.5L1099.5 693.5M1044.5 698.4L1099.5 698.4M1044.5 702.5L1099.5 702.5M1044.5 707.2L1099.5 707.2M1044.5 712.2L1099.5 712.2M1044.5 717L1099.5 717M1051.5 682.5L1051.5 721.5M1057.5 682.5L1057.5 721.5M1064.5 682.5L1064.5 721.5M1080.5 682.5L1080.5 721.5M1088.5 682.5L1088.5 721.5M1099.5 682.5L1099.5 721.5M1048.5 702.5L1048.5 721.5M1054.5 702.5L1054.5 721.5M1061.5 702.5L1061.5 721.5M1072.5 702.5L1072.5 721.5M1084.5 702.5L1084.5 721.5M1093.5 702.5L1093.5 721.5M1046.5 698.6H1049.5V701.2H1046.5ZM1052.5 698.6H1056V701.2H1052.5ZM1059.5 698.6H1063.5V701.2H1059.5ZM1066.5 698.6H1076.5V701.2H1066.5ZM1081.5 698.6H1086.5V701.2H1081.5ZM1090.5 698.6H1097.5V701.2H1090.5ZM1046.5 703.6H1049.5V706H1046.5ZM1073.5 703.6H1079.5V706H1073.5ZM1134.5 682.5L1134.5 721.5M1099.5 702.7L1134.5 702.7M1099.5 709.6L1169.5 709.6M1099.5 715.5L1134.5 715.5M1118.5 702.7L1118.5 715.5M1126.5 702.7L1126.5 715.5M1104 704.5H1113.5V707.6H1104ZM1120 704.5H1124.5V708H1120ZM1128.5 704.5H1132.5V708H1128.5ZM1104.5 709.6L1104.5 715.5M1108.5 709.6L1108.5 715.5M1113.5 709.6L1113.5 715.5M1117.5 709.6L1117.5 715.5M1128 710.8H1132V713.8H1128ZM1103.5 716.6H1125V720.4H1103.5ZM1128.5 715.5L1128.5 721.5M1134.5 695.3L1169.5 695.3M1142 699H1161V704.8H1142ZM1142 713.2H1162V717.8H1142ZM622.5 587.4H715.6V593.4H622.5ZM622.5 594.5H721.6V600.5H622.5ZM622.5 602.5H741.6V607.6H622.5ZM622.5 609.4H693.6V614.5H622.5ZM622.5 616.5H732.6V622.6H622.5ZM622.5 623.6H696.6V629.4H622.5ZM622.5 631.4H683.6V636.5H622.5ZM480 217.5H491.5V222.5H480ZM484.5 247L484.5 261M484.5 263L484.5 265M484.5 267L484.5 281M484.5 283L484.5 285M484.5 287L484.5 301M484.5 303L484.5 305M484.5 307L484.5 321M484.5 323L484.5 325M484.5 327L484.5 341M484.5 343L484.5 345M484.5 347L484.5 361M484.5 363L484.5 365M484.5 367L484.5 381M484.5 383L484.5 385M484.5 387L484.5 401M484.5 403L484.5 405M484.5 407L484.5 421M484.5 423L484.5 425M484.5 427L484.5 441M484.5 443L484.5 445M484.5 447L484.5 461M484.5 463L484.5 465M484.5 467L484.5 481M484.5 483L484.5 485M484.5 487L484.5 501M484.5 503L484.5 505M484.5 507L484.5 521M484.5 523L484.5 525M484.5 527L484.5 541M484.5 543L484.5 545M484.5 547L484.5 550.6M408.5 251L408.5 546.6M405 257.5L477 257.5M405 258.5L491.5 258.5M403 266.5L505.5 266.5M403 267.5L478 267.5M403 303.5L502 303.5M403 302.5L468 302.5M402 252H405.6V254.4H402ZM402 260H407V265H402ZM404 283H406.8V286.6H404ZM406.5 255L406.5 270M406.5 300L406.5 307M441.5 274H455.5V278.4H441.5ZM440 279.5L467 279.5M477 258.5H491.5V265.5H477ZM481 258.5L481 265.5M488 258.5L488 265.5M479 260L479 265.5M490 260L490 265.5M463.5 268H505.5V302H463.5ZM466.5 268L466.5 302M469.5 268L469.5 302M477 268L477 302M492 268L492 302M499.5 268L499.5 302M502.5 268L502.5 302M466.5 262L466.5 268M502.5 262L502.5 268M491.5 262L502.5 262M463.5 275L466.5 275M463.5 282L466.5 282M463.5 289L466.5 289M463.5 296L466.5 296M502.5 275L505.5 275M502.5 282L505.5 282M502.5 289L505.5 289M502.5 296L505.5 296M479 279.5L490 279.5M484 291.5L496 291.5M564 254.5L571.5 254.5M564.5 249.5H569.5V252.7H564.5ZM559 276.5L571.5 276.5M564.5 271.5H569.5V274.7H564.5ZM559 292.5L571.5 292.5M564.5 287.5H569.5V290.7H564.5ZM559 308.5L571.5 308.5M564.5 303.5H569.5V306.7H564.5ZM559 331.5L571.5 331.5M564.5 326.5H569.5V329.7H564.5ZM467 303L473.5 303M473.5 303L473.5 446M473.5 446L447.5 446M446.5 433L454 433M460 352.5L464 352.5M495 303L502.5 303M505.5 352.5L509 352.5M515 433L536 433M536 433L536 446M536 446L495 446M495 446L495 303M475 303L475 405.5M494 303L494 405.5M455 405.5L514 405.5M448 352.5L457 352.5M458.5 352.5L460.5 352.5M462 352.5L471 352.5M472.5 352.5L474.5 352.5M476 352.5L485 352.5M486.5 352.5L488.5 352.5M490 352.5L499 352.5M500.5 352.5L502.5 352.5M504 352.5L513 352.5M514.5 352.5L516.5 352.5M518 352.5L521 352.5M460 351.5L510 351.5M443 364.5L476 364.5M446 365.5L470 365.5M470.5 362L470.5 368M437 401H451V404.4H437ZM441 401L441 404.4M423 419H454V433H423ZM515 419H546V433H515ZM437 419L437 447M439.5 419L439.5 447M443.5 419L443.5 447M446 419L446 447M441.5 409L441.5 451M524 419L524 446M531 419L531 446M527.5 410L527.5 453M433 433H448V447H433ZM436 441H446V447H436ZM406 433L423 433M417.5 439H420.5V442.6H417.5ZM420.5 447L420.5 457M415 448L502 448M415 450.5L502 450.5M415 447L415 452M466 449L502 449M404 366H406.8V371.6H404ZM404 459H406.8V464.6H404ZM562 382.5L571.5 382.5M564.5 377.5H569.5V380.7H564.5ZM562 404.5L571.5 404.5M564.5 399.5H568.5V402.7H564.5ZM562 418.5L571.5 418.5M564.5 413.5H568.5V416.7H564.5ZM562 431.5L571.5 431.5M564.5 426.5H568.1V429.7H564.5ZM562 442.5L571.5 442.5M564.5 437.5H568.1V440.7H564.5ZM562 452L571.5 452M564.5 447H568.5V450.2H564.5ZM472 450.5L472 490M497 450.5L497 490M470 462.5L499 462.5M477 472H491V477H477ZM470 478L499 478M470 480.5L499 480.5M470 478L470 480.5M499 478L499 480.5M477 475L491 475M406 490L497 490M406 504.5L499 504.5M473 490L473 528M494 490L494 528M476 490L476 528M481 497H487V500H481ZM470 501.5L499 501.5M470 499L470 506M499 499L499 506M469.5 506H499.5V516.5H469.5ZM480 518.5H489V521.5H480ZM474 524L494 524M472 526L496 526M402 528L497 528M402 532.5L497 532.5M402 536.5L497 536.5M402 528L402 536.5M402 529H405V531.6H402ZM402 533.4H405V535.8H402ZM472 528L472 536.5M477 528L477 536.5M481 528L481 536.5M488 528L488 536.5M493 528L493 536.5M497 530L497 534.5M404 495H406.8V499.6H404ZM404 515H406.6V518.6H404ZM562 482.5L571.5 482.5M564.5 477.5H569.5V480.7H564.5ZM562 496.5L571.5 496.5M564.5 491.5H569.5V494.7H564.5ZM562 510L571.5 510M564.5 505H569.5V508.2H564.5ZM562 523.5L571.5 523.5M564.5 518.5H569.5V521.7H564.5ZM713.5 197.5H723.5V203.5H713.5ZM604.5 228.5L613.8 228.5M607 223.5H612V226.8H607ZM632.5 228.5L643 228.5M635 223.5H639.5V226.8H635ZM657.5 228.5L667.5 228.5M659 223.5H664V226.8H659ZM691 228.5L702 228.5M693 223.5H699V226.8H693ZM713 228.5L724 228.5M715 223.5H720.5V226.8H715ZM744 228.5L755 228.5M747 223.5H752V226.8H747ZM767.5 228.5L777 228.5M770 223.5H774V226.8H770ZM795.5 228.5L805.5 228.5M797.5 223.5H802.5V226.8H797.5ZM822.5 228.5L832 228.5M824.5 223.5H829V226.8H824.5ZM604.5 255.5L613.8 255.5M607 250.5H612V253.9H607ZM604.5 283.8L613.8 283.8M607 278.8H612V282.2H607ZM604.5 307.5L613.8 307.5M607 302.5H612V305.9H607ZM604.5 326L613.8 326M607 321H610.4V324.4H607ZM604.5 340.5L613.8 340.5M607 335.5H611.4V338.9H607ZM822.5 249L832 249M824.5 244H829V247.4H824.5ZM822.5 279L832 279M824.5 274H829V277.4H824.5ZM822.5 324L832 324M824.5 319H829V322.4H824.5ZM822.5 347L832 347M824.5 342H829V345.4H824.5ZM624.5 457.5L632.5 457.5M626 452.5H631V456H626ZM640.8 457.5L649.2 457.5M642.5 452.5H647.5V456H642.5ZM656 457.5L665 457.5M659 452.5H664V456H659ZM669.5 457.5L678 457.5M671 452.5H676V456H671ZM682.5 457.5L692.5 457.5M684.5 452.5H689.5V456H684.5ZM707.5 457.5L717 457.5M710 452.5H715V456H710ZM731 457.5L741 457.5M734 452.5H739V456H734ZM790 457.5L800 457.5M792.5 452.5H797.5V456H792.5ZM641.4 337L641.4 347M641.4 348.5L641.4 350.5M641.4 352L641.4 362M641.4 363.5L641.4 365.5M641.4 367L641.4 377M641.4 378.5L641.4 380.5M641.4 382L641.4 392M641.4 393.5L641.4 395.5M641.4 397L641.4 407M641.4 408.5L641.4 410M634.5 350.8H648.2V359H634.5ZM638.4 348.5H645.2V350.8H638.4ZM638.5 350.8L638.5 395.5M644 350.8L644 395.5M631.5 359H652V362H631.5ZM631.5 362H658.7V377H631.5ZM636.5 362L636.5 377M648.2 362L648.2 377M638.5 366L644 366M638.5 371L644 371M638.5 381L644 381M638.5 388L644 388M607.5 384L631.5 384M631.5 384L631.5 377M631.5 377L661 377M661 377L661 397.5M661 397.5L607.5 397.5M607.5 397.5L607.5 384M699 384H790V397.5H699ZM607.5 397.5H624.8V411H607.5ZM624.8 397.5H645.2V411H624.8ZM645.2 397.5H661V409.5H645.2ZM645.2 413.3L664.7 413.3M701 397.5H735V411H701ZM708 400.5H722V404.2H708ZM735 397.5H788V411H735ZM607.5 411L645.2 411M699 411L790 411M790 397.5L811 397.5M700 361.5L820.5 361.5M700 376.5L811 376.5M700 361.5L700 376.5M706 361.2L706 384M706 374.5L790 374.5M790 361.2L790 384M713.8 376.2H735V380H713.8ZM756 376.2H778.8V380H756ZM802.5 372.5L802.5 383M790 377.5L802.5 377.5M661 359H699V361.5H661ZM661 361.5H699V416H661ZM665 361.5L665 416M669.5 361.5L669.5 442.5M691 361.5L691 416M667.2 362L667.2 363.2M667.2 364.4L667.2 365.6M667.2 366.8L667.2 368M667.2 369.2L667.2 370.4M667.2 371.6L667.2 372.8M667.2 374L667.2 375.2M667.2 376.4L667.2 377.6M667.2 378.8L667.2 380M667.2 381.2L667.2 382.4M667.2 383.6L667.2 384.8M667.2 386L667.2 387.2M667.2 388.4L667.2 389.6M667.2 390.8L667.2 392M667.2 393.2L667.2 394.4M667.2 395.6L667.2 396.8M667.2 398L667.2 399.2M667.2 400.4L667.2 401.6M667.2 402.8L667.2 404M667.2 405.2L667.2 406.4M667.2 407.6L667.2 408.8M667.2 410L667.2 411.2M667.2 412.4L667.2 413.6M667.2 414.8L667.2 416M675 392.5H684V395.5H675ZM669.5 397.5L691 397.5M672 405L688 405M669.5 411L691 411M679.5 305L679.5 317M679.5 318.5L679.5 320.5M679.5 322L679.5 334M679.5 335.5L679.5 337.5M679.5 339L679.5 351M679.5 352.5L679.5 354.5M679.5 356L679.5 368M679.5 369.5L679.5 371.5M679.5 373L679.5 385M679.5 386.5L679.5 388.5M679.5 390L679.5 402M679.5 403.5L679.5 405.5M679.5 407L679.5 419M679.5 420.5L679.5 422.5M679.5 424L679.5 436M679.5 437.5L679.5 439.5M679.5 441L679.5 442M634 420H725V432.5H634ZM640 420L640 432.5M721 420L721 432.5M677.5 416L677.5 442.5M670 420L670 432.5M689 420L689 432.5M673.7 416L673.7 417.2M673.7 418.4L673.7 419.6M673.7 420.8L673.7 422M673.7 423.2L673.7 424.4M673.7 425.6L673.7 426.8M673.7 428L673.7 429.2M673.7 430.4L673.7 431.6M673.7 432.8L673.7 434M673.7 435.2L673.7 436.4M673.7 437.6L673.7 438.8M673.7 440L673.7 441.2M664 434H672.5V442.5H664ZM686 434H692.5V442.5H686ZM662 442.5L696 442.5M636.5 416L636.5 440M723 416L723 436M612.5 417.5H627.5V421.6H612.5ZM611 422.5L634 422.5M699 415.5L821 415.5M725 420L811 420M725 433.5L813 433.5M665 344.5H693.8V360H665ZM668 330.5H690.5V344.5H668ZM669.5 344.5L669.5 360M690 344.5L690 360M671 321H687V330.5H671ZM673.8 321L673.8 330.5M677.5 321L677.5 330.5M681.5 321L681.5 330.5M685 321L685 330.5M671 323L687 323M679.5 305L679.5 321M674.5 333.8H684.5V337.8H674.5ZM671 339.5L689 339.5M710.5 344.5H739.5V360H710.5ZM712.5 330.5H736V344.5H712.5ZM715 331L734 331M719 335H729V338.6H719ZM715 340L735 340M725 315L725 325M725 326.5L725 328.5M725 330L725 340M725 341.5L725 343.5M725 345L725 355M725 356.5L725 358.5M725 360L725 370M725 371.5L725 373.5M725 375L725 379M714 344.5L714 355M736 344.5L736 360M752.5 344.5H782V360H752.5ZM755 330.5H780V344.5H755ZM755 337L780 337M764 333H769.5V335.2H764ZM752.5 321H782V329H752.5ZM758 305H777V320.5H758ZM763.8 311.8H771.2V314.4H763.8ZM760 315.5L775 315.5M760.5 295.5H774.5V305H760.5ZM763.5 295.5L763.5 305M771.5 295.5L771.5 305M760.5 298L774.5 298M767.5 290L767.5 300M767.5 301.5L767.5 303.5M767.5 305L767.5 315M767.5 316.5L767.5 318.5M767.5 320L767.5 330M767.5 331.5L767.5 333.5M767.5 335L767.5 345M767.5 346.5L767.5 348.5M767.5 350L767.5 360M767.5 361.5L767.5 363.5M767.5 365L767.5 375M767.5 376.5L767.5 378.5M811 295L811 448.5M820.5 361.5L820.5 416M774.5 297.5L812.5 297.5M777 305L812.5 305M777 320.5L812.5 320.5M782 329L812.5 329M780 344.5L812.5 344.5M782 361.2L812.5 361.2M806.5 298.8H809.5V303H806.5ZM806.5 311H809.5V315H806.5ZM806.5 323H809.5V327H806.5ZM806.5 335.5H809.5V339.5H806.5ZM806.5 351H809.5V355H806.5ZM806.5 367H809.5V371H806.5ZM806.5 385H809.5V389H806.5ZM806.5 404H809.5V408H806.5ZM806.5 424H809.5V427.5H806.5ZM806.5 437H809.5V441H806.5ZM815.5 385.5H818.5V389.5H815.5ZM805 443L813 443M725 417.8L813 417.8M999 215H1010V221H999ZM886.5 246L886.5 377M900.3 246L900.3 377M886.5 246L900.3 246M886.5 377L900.3 377M886.5 271.5L900.3 271.5M886.5 274L900.3 274M886.5 247.5L900.3 247.5M891.5 250L894.8 250M894.8 250L894.8 262M891.5 262L891.5 250M893.3 234.4L893.3 244.4M893.3 245.9L893.3 247.9M893.3 249.4L893.3 259.4M893.3 260.9L893.3 262.9M893.3 264.4L893.3 274.4M893.3 275.9L893.3 277.9M893.3 279.4L893.3 289.4M893.3 290.9L893.3 292.9M893.3 294.4L893.3 304.4M893.3 305.9L893.3 307.9M893.3 309.4L893.3 319.4M893.3 320.9L893.3 322.9M893.3 324.4L893.3 334.4M893.3 335.9L893.3 337.9M893.3 339.4L893.3 349.4M893.3 350.9L893.3 352.9M893.3 354.4L893.3 364.4M893.3 365.9L893.3 367.9M893.3 369.4L893.3 379.4M893.3 380.9L893.3 382.9M893.3 384.4L893.3 390M880 309.5L889 309.5M880 311.5L889 311.5M890 309.5L896.5 309.5M890 311.5L896.5 311.5M897.8 309.5L906 309.5M897.8 311.5L906 311.5M887.9 379.5H898.7V388.5H887.9ZM1087.5 240.2L1087.5 377M1101.9 240.2L1101.9 377M1087.5 240.2L1101.9 240.2M1087.5 377L1101.9 377M1087.5 271.5L1101.9 271.5M1087.5 274L1101.9 274M1087.5 241.7L1101.9 241.7M1092.8 250L1096.1 250M1096.1 250L1096.1 262M1092.8 262L1092.8 250M1094.6 227L1094.6 237M1094.6 238.5L1094.6 240.5M1094.6 242L1094.6 252M1094.6 253.5L1094.6 255.5M1094.6 257L1094.6 267M1094.6 268.5L1094.6 270.5M1094.6 272L1094.6 282M1094.6 283.5L1094.6 285.5M1094.6 287L1094.6 297M1094.6 298.5L1094.6 300.5M1094.6 302L1094.6 312M1094.6 313.5L1094.6 315.5M1094.6 317L1094.6 327M1094.6 328.5L1094.6 330.5M1094.6 332L1094.6 342M1094.6 343.5L1094.6 345.5M1094.6 347L1094.6 357M1094.6 358.5L1094.6 360.5M1094.6 362L1094.6 372M1094.6 373.5L1094.6 375.5M1094.6 377L1094.6 387M1094.6 388.5L1094.6 390M1081.3 309.5L1090.3 309.5M1081.3 311.5L1090.3 311.5M1091.3 309.5L1097.8 309.5M1091.3 311.5L1097.8 311.5M1099.1 309.5L1107.3 309.5M1099.1 311.5L1107.3 311.5M1089.2 379.5H1100V388.5H1089.2ZM1089.5 236.5H1100V240.2H1089.5ZM1149.5 246L1149.5 409.2M1101.9 246.5L1151.5 246.5M1101.9 274L1151.5 274M1147.5 351.5L1151.5 351.5M1147.5 409.7L1151.5 409.7M1132.8 365.5L1151.5 365.5M1132.8 379.5L1151.5 379.5M1132.8 388.5L1151.5 388.5M1144.8 259H1147.6V262.8H1144.8ZM1144.8 310.6H1147.6V315.6H1144.8ZM1144.8 356.4H1147.6V360.6H1144.8ZM1144.8 370.2H1147.6V374.6H1144.8ZM1144.8 381.5H1147.6V385.8H1144.8ZM1144.8 396.6H1147.6V400.8H1144.8ZM850 351.5H1150.4V365.5H850ZM850 351.5L850 365.5M881.5 351.5L881.5 365.5M904 351.5L904 365.5M980.4 351.5L980.4 365.5M1007.2 351.5L1007.2 365.5M1083.8 351.5L1083.8 365.5M1106.4 351.5L1106.4 365.5M1136.5 351.5L1136.5 365.5M882.5 355H884.8V363H882.5ZM901.5 355H903.6V363H901.5ZM1084.2 355H1086.3V363H1084.2ZM1103.2 355H1105.5V363H1103.2ZM980.4 353L1007.2 353M980.4 358L1007.2 358M854.3 365.5H1132.8V388.5H854.3ZM854.3 378L1132.8 378M854.3 379.5L1132.8 379.5M922.6 367.5L1064.6 367.5M866 367.5H868.6V377.5H866ZM867.3 368L867.3 369.2M867.3 370.4L867.3 371.6M867.3 372.8L867.3 374M867.3 375.2L867.3 376.4M917.7 367.5H920.1V377.5H917.7ZM918.9 368L918.9 369.2M918.9 370.4L918.9 371.6M918.9 372.8L918.9 374M918.9 375.2L918.9 376.4M1067 367.5H1069.5V377.5H1067ZM1068.2 368L1068.2 369.2M1068.2 370.4L1068.2 371.6M1068.2 372.8L1068.2 374M1068.2 375.2L1068.2 376.4M1118.6 367.5H1121.2V377.5H1118.6ZM1119.9 368L1119.9 369.2M1119.9 370.4L1119.9 371.6M1119.9 372.8L1119.9 374M1119.9 375.2L1119.9 376.4M922.6 365.5L922.6 378M1064.6 365.5L1064.6 378M888 376.8L899 376.8M1089 376.8L1100.5 376.8M854.3 379.5L854.3 388.5M887.7 379.5L887.7 388.5M898.5 379.5L898.5 388.5M986.7 379.5L986.7 388.5M1001.6 379.5L1001.6 388.5M1089.4 379.5L1089.4 388.5M1100.2 379.5L1100.2 388.5M1132.8 379.5L1132.8 388.5M948.7 388.5H1038.9V409.7H948.7ZM1002.2 396.6H1011.5V401H1002.2ZM996.6 398.2L1004.6 398.2M1006.1 398.2L1008.1 398.2M1009.6 398.2L1017.6 398.2M1019.1 398.2L1021.1 398.2M1022.6 398.2L1030.6 398.2M1032.1 398.2L1034.1 398.2M1035.6 398.2L1043.6 398.2M1045.1 398.2L1045.7 398.2M959.3 388.5L959.3 409.7M951 388.5L951 411.5M953.5 388.5L953.5 411.5M956 388.5L956 411.5M971.2 402L971.2 409.7M986.7 365.5L986.7 409.7M1001.6 365.5L1001.6 409.7M993.6 328L993.6 338M993.6 339.5L993.6 341.5M993.6 343L993.6 353M993.6 354.5L993.6 356.5M993.6 358L993.6 368M993.6 369.5L993.6 371.5M993.6 373L993.6 383M993.6 384.5L993.6 386.5M993.6 388L993.6 398M993.6 399.5L993.6 401.5M993.6 403L993.6 413M993.6 414.5L993.6 416.5M993.6 418L993.6 428M993.6 429.5L993.6 431.5M991 367L991 376M996 367L996 376M986.7 377L1001.6 377M986.7 409.7L986.7 428.9M990 409.7L990 428.9M996 409.7L996 428.9M1001.6 409.7L1001.6 428.9M1038.9 409.7L1151.5 409.7M896.5 457.5L905.8 457.5M898.3 452.4H903.7V456.2H898.3ZM917.4 457.5L928 457.5M919.2 452.4H924.6V456.2H919.2ZM944.3 457.5L954.9 457.5M946.8 452.4H952.2V456.2H946.8ZM968.2 457.5L978.7 457.5M970.7 452.4H976.1V456.2H970.7ZM1006.4 457.5L1017.2 457.5M1008.4 452.4H1013.8V456.2H1008.4ZM1042.3 457.5L1052.9 457.5M1044.8 452.4H1050.2V456.2H1044.8ZM1061.9 457.5L1072.5 457.5M1063.7 452.4H1069.1V456.2H1063.7ZM1085 457.5L1095.8 457.5M1087.6 452.4H1093V456.2H1087.6ZM928.2 224.5L938.6 224.5M930.3 219.5H935.6V223.5H930.3ZM928.2 247.5L938.6 247.5M930.3 242.5H935.6V246.5H930.3ZM928.2 270.5L938.6 270.5M930.3 265.5H935.6V269.5H930.3ZM928.2 290L938.6 290M930.3 285H935.6V289H930.3ZM928.2 309.8L938.6 309.8M930.3 304.8H935.6V308.8H930.3ZM950 309.8L959.4 309.8M951.3 304.8H957.4V308.8H951.3ZM993.6 328L993.6 351.5"/><path stroke-width="0.742" d="M423 420.4L424.4 419M423 426.4L430.4 419M423 432.3L436.3 419M428.3 433L437 424.3M434.2 433L437 430.2M446 421.2L448.2 419M446 427.1L454 419.1M446.1 433L454 425.1M452 433L454 431M515 423.5L519.5 419M515 429.4L524 420.4M517.4 433L524 426.4M523.3 433L524 432.3M531 425.3L537.3 419M531 431.2L543.2 419M535.2 433L546 422.2M541.1 433L546 428.1M474 478L477 475M491 475L494 478M469.5 509.1L472.6 506M469.5 512L475.5 506M469.5 514.8L478.3 506M470.6 516.5L481.1 506M473.4 516.5L483.9 506M476.3 516.5L486.8 506M479.1 516.5L489.6 506M481.9 516.5L492.4 506M484.8 516.5L495.3 506M487.6 516.5L498.1 506M490.4 516.5L499.5 507.4M493.2 516.5L499.5 510.2M496.1 516.5L499.5 513.1M498.9 516.5L499.5 515.9M471.2 516.5L469.5 514.8M474.1 516.5L469.5 511.9M476.9 516.5L469.5 509.1M479.7 516.5L469.5 506.3M482.6 516.5L472.1 506M485.4 516.5L474.9 506M488.2 516.5L477.7 506M491 516.5L480.5 506M493.9 516.5L483.4 506M496.7 516.5L486.2 506M499.5 516.5L489 506M499.5 513.6L491.9 506M499.5 510.8L494.7 506M499.5 508L497.5 506M604.5 340.5L637 372M652.8 377L648.2 372.4M658.3 377L648.2 366.9M658.7 371.9L648.8 362M658.7 366.4L654.3 362M636.2 377L631.5 372.3M636.5 371.8L631.5 366.8M636.5 366.2L632.3 362M607.5 385.3L608.8 384M607.5 390.8L614.3 384M607.5 396.3L619.8 384M611.8 397.5L625.3 384M631.5 377.8L632.3 377M617.3 397.5L630.8 384M631.5 383.3L637.8 377M622.9 397.5L638.5 381.9M643.4 377L644 376.4M628.4 397.5L638.5 387.4M644 381.9L648.9 377M633.9 397.5L638.5 392.9M644 387.4L654.4 377M638.9 398L639.4 397.5M644 392.9L659.9 377M644.9 397.5L661 381.4M650.4 397.5L661 386.9M655.9 397.5L661 392.4M699 387.5L702.5 384M699 393.1L708.1 384M700.1 397.5L713.6 384M705.6 397.5L719.1 384M711.1 397.5L724.6 384M716.6 397.5L730.1 384M722.1 397.5L735.6 384M727.6 397.5L741.1 384M733.2 397.5L746.7 384M738.7 397.5L752.2 384M744.2 397.5L757.7 384M749.7 397.5L763.2 384M755.2 397.5L768.7 384M760.7 397.5L774.2 384M766.3 397.5L779.8 384M771.8 397.5L785.3 384M777.3 397.5L790 384.8M782.8 397.5L790 390.3M788.3 397.5L790 395.8M609.6 411L607.5 408.9M615.1 411L607.5 403.4M620.6 411L607.5 397.9M624.8 409.7L612.6 397.5M624.8 404.2L618.1 397.5M624.8 398.7L623.6 397.5M645.7 413.3L649.5 409.5M651.2 413.3L655 409.5M656.7 413.3L660.5 409.5M662.2 413.3L664.7 410.8M736.4 411L735 409.6M741.9 411L735 404.1M747.4 411L735 398.6M753 411L739.5 397.5M758.5 411L745 397.5M764 411L750.5 397.5M769.5 411L756 397.5M775 411L761.5 397.5M780.5 411L767 397.5M786 411L772.5 397.5M788 407.4L778.1 397.5M788 401.9L783.6 397.5M703.9 384L700 380.1M706 382.4L700 376.4M706 378.8L700 372.8M706 375.1L700 369.1M706 371.4L700 365.4M706 367.7L700 361.7M706 364L703.2 361.2M640 424.5L644.5 420M640 430L650 420M643 432.5L655.5 420M648.5 432.5L661 420M654 432.5L666.5 420M659.6 432.5L670 422.1M665.1 432.5L670 427.6M689 425.1L694.1 420M689 430.6L699.6 420M692.6 432.5L705.1 420M698.2 432.5L710.7 420M703.7 432.5L716.2 420M709.2 432.5L721 420.7M714.7 432.5L721 426.2M720.2 432.5L721 431.7M664 435.7L665.7 434M664 438L668 434M664 440.2L670.2 434M664 442.5L672.5 434M666.2 442.5L672.5 436.2M668.5 442.5L672.5 438.5M670.8 442.5L672.5 440.8M666.5 442.5L664 440M668.8 442.5L664 437.7M671 442.5L664 435.5M672.5 441.7L664.8 434M672.5 439.4L667.1 434M672.5 437.2L669.3 434M672.5 434.9L671.6 434M686 436.3L688.3 434M686 438.6L690.6 434M686 440.8L692.5 434.3M686.6 442.5L692.5 436.6M688.9 442.5L692.5 438.9M691.1 442.5L692.5 441.1M752.5 324.1L755.6 321M752.5 328.1L759.6 321M755.6 329L763.6 321M759.6 329L767.6 321M763.6 329L771.6 321M767.6 329L775.6 321M771.6 329L779.6 321M775.6 329L782 322.6M779.6 329L782 326.6M753.2 329L752.5 328.3M757.2 329L752.5 324.3M761.2 329L753.2 321M765.2 329L757.2 321M769.2 329L761.2 321M773.2 329L765.2 321M777.2 329L769.2 321M781.3 329L773.3 321M782 325.7L777.3 321M782 321.7L781.3 321M851.5 365.5L850 364M857.5 365.5L850 358M863.5 365.5L850 352M869.5 365.5L855.5 351.5M875.5 365.5L861.5 351.5M881.5 365.5L867.5 351.5M881.5 359.5L873.5 351.5M881.5 353.5L879.5 351.5M905.5 365.5L904 364M911.5 365.5L904 358M917.5 365.5L904 352M923.5 365.5L909.5 351.5M929.5 365.5L915.5 351.5M935.5 365.5L921.5 351.5M941.5 365.5L927.5 351.5M947.5 365.5L933.5 351.5M953.5 365.5L939.5 351.5M959.6 365.5L945.6 351.5M965.6 365.5L951.6 351.5M971.6 365.5L957.6 351.5M977.6 365.5L963.6 351.5M980.4 362.3L969.6 351.5M980.4 356.3L975.6 351.5M1013.6 365.5L1007.2 359.1M1019.6 365.5L1007.2 353.1M1025.6 365.5L1011.6 351.5M1031.6 365.5L1017.6 351.5M1037.6 365.5L1023.6 351.5M1043.6 365.5L1029.6 351.5M1049.6 365.5L1035.6 351.5M1055.6 365.5L1041.6 351.5M1061.6 365.5L1047.6 351.5M1067.6 365.5L1053.6 351.5M1073.6 365.5L1059.6 351.5M1079.6 365.5L1065.6 351.5M1083.8 363.7L1071.6 351.5M1083.8 357.7L1077.6 351.5M1109.6 365.5L1106.4 362.3M1115.6 365.5L1106.4 356.3M1121.6 365.5L1107.6 351.5M1127.6 365.5L1113.6 351.5M1133.6 365.5L1119.6 351.5M1136.5 362.4L1125.6 351.5M1136.5 356.4L1131.6 351.5M858 378L854.3 374.3M864 378L854.3 368.3M866 374L857.5 365.5M866 368L863.5 365.5M870 378L868.6 376.6M876 378L868.6 370.6M882 378L869.5 365.5M886.3 376.3L875.5 365.5M886.3 370.3L881.5 365.5M906 378L901 373M912 378L901 367M917.7 377.7L905.5 365.5M917.7 371.7L911.5 365.5M922.6 376.6L920.1 374.1M922.6 370.6L920.1 368.1M1067 376.9L1064.6 374.5M1067 370.9L1064.6 368.5M1074.1 378L1069.5 373.4M1080.1 378L1069.5 367.4M1086.1 378L1073.6 365.5M1087.5 373.4L1079.6 365.5M1087.5 367.4L1085.6 365.5M1104.1 378L1101.9 375.8M1110.1 378L1101.9 369.8M1116.1 378L1103.6 365.5M1118.6 374.5L1109.6 365.5M1118.6 368.5L1115.6 365.5M1122.1 378L1121.2 377.1M1128.1 378L1121.2 371.1M1132.8 376.7L1121.6 365.5M1132.8 370.7L1127.6 365.5M922.6 373.5L928.6 367.5M924.1 378L934.6 367.5M930.1 378L940.6 367.5M936.1 378L946.6 367.5M942.1 378L952.6 367.5M948.1 378L958.6 367.5M954.1 378L964.6 367.5M960.1 378L970.6 367.5M966.1 378L976.6 367.5M972.1 378L982.6 367.5M978.1 378L986.7 369.4M984.1 378L986.7 375.4M1001.6 372.5L1006.6 367.5M1002.1 378L1012.6 367.5M1008.1 378L1018.6 367.5M1014.1 378L1024.6 367.5M1020.1 378L1030.6 367.5M1026.1 378L1036.6 367.5M1032.1 378L1042.6 367.5M1038.1 378L1048.6 367.5M1044.1 378L1054.6 367.5M1050.1 378L1060.6 367.5M1056.1 378L1064.6 369.5M1062.1 378L1064.6 375.5M856.5 388.5L854.3 386.3M862.5 388.5L854.3 380.3M868.5 388.5L859.5 379.5M874.5 388.5L865.5 379.5M880.5 388.5L871.5 379.5M886.5 388.5L877.5 379.5M887.7 383.7L883.5 379.5M904.5 388.5L898.5 382.5M910.5 388.5L901.5 379.5M916.5 388.5L907.5 379.5M922.5 388.5L913.5 379.5M928.5 388.5L919.5 379.5M934.5 388.5L925.5 379.5M940.5 388.5L931.5 379.5M946.5 388.5L937.5 379.5M952.5 388.5L943.5 379.5M958.5 388.5L949.5 379.5M964.5 388.5L955.5 379.5M970.5 388.5L961.5 379.5M976.5 388.5L967.5 379.5M982.6 388.5L973.6 379.5M986.7 386.6L979.6 379.5M986.7 380.6L985.6 379.5M1006.6 388.5L1001.6 383.5M1012.6 388.5L1003.6 379.5M1018.6 388.5L1009.6 379.5M1024.6 388.5L1015.6 379.5M1030.6 388.5L1021.6 379.5M1036.6 388.5L1027.6 379.5M1042.6 388.5L1033.6 379.5M1048.6 388.5L1039.6 379.5M1054.6 388.5L1045.6 379.5M1060.6 388.5L1051.6 379.5M1066.6 388.5L1057.6 379.5M1072.6 388.5L1063.6 379.5M1078.6 388.5L1069.6 379.5M1084.6 388.5L1075.6 379.5M1089.4 387.3L1081.6 379.5M1089.4 381.3L1087.6 379.5M1102.6 388.5L1100.2 386.1M1108.6 388.5L1100.2 380.1M1114.6 388.5L1105.6 379.5M1120.6 388.5L1111.6 379.5M1126.6 388.5L1117.6 379.5M1132.6 388.5L1123.6 379.5M1132.8 382.7L1129.6 379.5M959.3 390.8L961.6 388.5M959.3 396.8L967.6 388.5M959.3 402.8L973.6 388.5M959.3 408.8L979.6 388.5M964.4 409.7L985.6 388.5M970.4 409.7L986.7 393.4M976.4 409.7L986.7 399.4M982.4 409.7L986.7 405.4M1001.6 390.5L1003.6 388.5M1001.6 396.5L1009.6 388.5M1001.6 402.5L1015.6 388.5M1001.6 408.5L1011.5 398.6M1016 394.1L1021.6 388.5M1006.4 409.7L1012.1 404M1022 394.1L1027.6 388.5M1012.4 409.7L1018.1 404M1028 394.1L1033.6 388.5M1018.4 409.7L1024.1 404M1034 394.1L1038.9 389.2M1024.4 409.7L1030.1 404M1030.4 409.7L1036.1 404M1036.4 409.7L1038.9 407.2M948.7 390.3L950.5 388.5M948.7 392.8L953 388.5M948.7 395.4L955.6 388.5M948.7 397.9L958.1 388.5M949.2 400L959.3 389.9M951.7 400L959.3 392.4M954.3 400L959.3 395M956.8 400L959.3 397.5M949.8 400L948.7 398.9M953.2 400L948.7 395.5M956.6 400L948.7 392.1M959.3 399.3L948.7 388.7M959.3 395.9L951.9 388.5M959.3 392.5L955.3 388.5M959.3 389.1L958.7 388.5"/><path stroke-width="0.795" d="M452.4 446L447.1 441.2M458.6 446L446.7 435.3M464.7 446L450.3 433M470.8 446L454.1 430.9M473.5 442.9L454.3 425.6M473.5 437.4L454.5 420.2M473.5 431.9L454.7 414.9M473.5 426.3L454.9 409.6M473.5 420.8L455.2 404.3M473.5 415.3L455.6 399.2M473.5 409.8L456.1 394.1M473.5 404.3L456.6 389M473.5 398.8L457.1 384M473.5 393.2L457.5 378.9M473.5 387.7L458 373.8M473.5 382.2L458.5 368.7M473.5 376.7L459 363.6M473.5 371.2L459.4 358.5M473.5 365.7L459.9 353.4M473.5 360.1L464.1 351.6M473.5 354.6L464.4 346.4M473.5 349.1L464.7 341.2M473.5 343.6L465 335.9M473.5 338.1L465.3 330.7M473.5 332.6L465.6 325.5M473.5 327L466 320.2M473.5 321.5L466.3 315M473.5 316L466.6 309.8M473.5 310.5L466.9 304.5M473.5 305L471.3 303M501.5 446L495 440.2M507.6 446L495 434.7M513.7 446L495 429.1M519.8 446L495 423.6M526 446L495 418.1M532.1 446L517.7 433M514.8 430.4L495 412.6M536 444L523.8 433M514.3 424.5L495 407.1M536 438.5L529.9 433M513.9 418.6L495 401.6M513.5 412.7L495 396M513 406.8L495 390.5M512.6 400.8L495 385M512.1 394.9L495 379.5M511.7 389L495 374M511.3 383.1L495 368.5M510.8 377.2L495 362.9M510.4 371.3L495 357.4M510 365.4L495 351.9M509.5 359.5L495 346.4M509.1 353.6L507.9 352.5M505.4 350.2L495 340.9M505 344.4L495 335.4M504.7 338.5L495 329.8M504.3 332.7L495 324.3M503.9 326.9L495 318.8M503.6 321L495 313.3M503.2 315.2L495 307.8M502.9 309.4L495.8 303M502.5 303.5L502 303M604.5 326L657 375M624.5 457.5L657.5 422.5M653 402.5L657.5 398.5M691 363.8L693 361.5M691 369.4L697.7 361.5M691 375L699 365.5M691 380.6L699 371.1M691 386.2L699 376.7M691 391.8L699 382.3M691 397.4L699 387.9M691 403L699 393.5M691 408.6L699 399.1M691.2 414L699 404.7M695.9 414L699 410.3M896.5 457.5L950.6 395.8M1042.3 457.5L997.1 402.9M1061.9 457.5L1003.4 392.8M1085 457.5L1013.4 391.6M929.2 224.5L895.8 252.8M950.6 309.8L990.8 354.6"/><path stroke-width="0.848" d="M469.5 274.1L473.8 268M469.5 281.4L477 270.7M469.5 288.7L477 278M469.5 296.1L477 285.3M470.5 302L477 292.7M475.6 302L477 300M492 271.2L494.3 268M492 278.6L499.4 268M492 285.9L499.5 275.2M492 293.2L499.5 282.5M492 300.5L499.5 289.8M496.1 302L499.5 297.1M640.8 457.5L662.5 430M707.5 457.5L690 444M731 457.5L710 430M893.3 264.6L891.5 262M1094.6 264.6L1092.8 262"/><path stroke-width="0.901" d="M604.5 228.5L667.5 332.5M604.5 255.5L662.5 357.5M604.5 307.5L632.5 357.5M822.5 249L779 320M822.5 279L762 370M822.5 324L732 376M822.5 347L770 377M894.8 262L893.3 264.6M1096.1 262L1094.6 264.6M917.4 457.5L951.8 402.9M1006.4 457.5L988.3 429.3M929.2 247.5L897.3 298.8"/><path stroke-width="0.954" d="M502 306L559 331.5M493 528L497 530M497 534.5L493 536.5M822.5 228.5L777.5 320M604.5 283.8L640 350M656 457.5L667.5 436M682.5 457.5L675 442"/><path stroke-width="1.007" d="M505 296L559 308.5M504 399.6L562 382.5M447 440L562 404.5M478 447L562 418.5M537 438L562 431.5M498 529.4L562 510M632.5 228.5L671 322.5M795.5 228.5L773.8 312.5M790 457.5L726 435M929.2 270.5L894 360.8M929.2 290L907.9 370.9"/><path stroke-width="1.06" d="M492 262.4L564 254.5M505.5 269L559 276.5M496 283L559 292.5M447.5 446L446.5 433M454 433L455 406M455 406L460 352.5M464 352.5L467 303M502.5 303L505.5 352.5M509 352.5L514 420M514 420L515 433M534 446L562 442.5M497 466.4L562 452M494 493.6L562 482.5M499.5 509.6L562 496.5M494 534L562 523.5M657.5 228.5L676 320M691 228.5L688.5 330M713 228.5L714 355M744 228.5L730 320M767.5 228.5L762 294M669.5 457.5L670 440M944.3 457.5L956.1 405.4M968.2 457.5L971.2 402.9M929.2 309.8L925 370.9"/><rect x="481.5" y="271.5" width="6" height="28" rx="3" ry="3"/><path d="M690.5 401L696.5 416H690.5Z" fill="#fff"/><path d="M717.5 331V325.5A6.75 6.5 0 0 1 731 325.5V331M720 331V326A5 4.6 0 0 1 730 326V331"/><path d="M893.3 357.8l3.4 3.6-3.4 3.6-3.4-3.6z" fill="#fff"/><path d="M1094.6 357.8l3.4 3.6-3.4 3.6-3.4-3.6z" fill="#fff"/><path d="M984.8 365.5V363Q984.8 361.8 986 361.8H1002.3Q1003.5 361.8 1003.5 363V365.5"/><path d="M1038.9 394.1H1013Q1011.5 394.1 1011.5 395.6V402.5Q1011.5 404 1013 404H1038.9"/><path d="M982.3 409.7V426.9Q982.3 428.9 984.3 428.9H1004Q1006 428.9 1006 426.9V409.7"/></g><text x="655" y="568.9" font-size="8.6" fill="#fff" textLength="21.8" lengthAdjust="spacingAndGlyphs">技术要求</text><path d="M366.5 721.5V692.5M366.5 721.5H395.5M361.4 701L366.5 692.5L371.6 701M388.2 716.2L395.5 721.5L388.2 726.8" fill="none" stroke="#f0f" stroke-width="1" shape-rendering="crispEdges"/></g><g id="ribbon-ui"><rect x="340.0" y="0" width="1" height="90" fill="#d2d2d2"/><rect x="490.0" y="0" width="1" height="90" fill="#d2d2d2"/><rect x="646.0" y="0" width="1" height="90" fill="#d2d2d2"/><rect x="1026.0" y="0" width="1" height="90" fill="#d2d2d2"/><rect x="1157.0" y="0" width="1" height="90" fill="#d2d2d2"/><text x="160.0" y="85.2" font-size="13" fill="#707070" textLength="26.0">绘图</text><text x="403.3" y="85.2" font-size="13" fill="#707070" textLength="26.0">修改</text><text x="556.0" y="85.2" font-size="13" fill="#707070" textLength="26.0">标注</text><text x="824.2" y="85.2" font-size="13" fill="#707070" textLength="26.0">特性</text><text x="1073.6" y="85.2" font-size="13" fill="#707070" textLength="39.0">剪切板</text><path d="M19.7 32.1L46.1 5.9" stroke="#3a3f46" stroke-width="1.6" fill="none"/><rect x="17.80" y="30.20" width="3.80" height="3.80" fill="#fff" stroke="#111" stroke-width="1"/><rect x="44.20" y="4.00" width="3.80" height="3.80" fill="#fff" stroke="#111" stroke-width="1"/><text x="19.8" y="50.2" font-size="13" fill="#444" textLength="26.0">直线</text><path d="M30.00 57.80h5l-2.5 3z" fill="#444"/><path d="M61.9 27H81.5A8.6 8.6 0 0 0 81.5 9.8H78" stroke="#3a3f46" stroke-width="1.1" fill="none"/><rect x="60.20" y="25.30" width="3.40" height="3.40" fill="#fff" stroke="#111" stroke-width="1"/><rect x="76.30" y="25.30" width="3.40" height="3.40" fill="#fff" stroke="#111" stroke-width="1"/><rect x="76.30" y="8.10" width="3.40" height="3.40" fill="#fff" stroke="#111" stroke-width="1"/><text x="56.0" y="50.2" font-size="13" fill="#444" textLength="39.0">多段线</text><circle cx="118" cy="19.1" r="15" fill="#fff" stroke="#3a3f46" stroke-width="1.1"/><rect x="116.40" y="17.50" width="3.20" height="3.20" fill="#fff" stroke="#111" stroke-width="1"/><text x="111.0" y="50.2" font-size="13" fill="#444" textLength="13.0">圆</text><path d="M115.00 57.80h5l-2.5 3z" fill="#444"/><path d="M146.7 31.9C147.5 17 159 6.6 173.3 6" stroke="#222" stroke-width="1.2" fill="none"/><rect x="144.80" y="30.00" width="3.80" height="3.80" fill="#fff" stroke="#111" stroke-width="1"/><rect x="171.40" y="4.10" width="3.80" height="3.80" fill="#fff" stroke="#111" stroke-width="1"/><text x="147.3" y="50.2" font-size="13" fill="#444" textLength="26.0">圆弧</text><path d="M157.00 57.80h5l-2.5 3z" fill="#444"/><path d="M187.6 32.7C188 18 196 12.5 203 17.5C210 23 215 21 216.1 4.9" stroke="#3a3f46" stroke-width="1.1" fill="none"/><rect x="185.70" y="30.80" width="3.80" height="3.80" fill="#fff" stroke="#111" stroke-width="1"/><rect x="214.20" y="3.00" width="3.80" height="3.80" fill="#fff" stroke="#111" stroke-width="1"/><text x="189.2" y="50.2" font-size="13" fill="#444" textLength="26.0">曲线</text><path d="M198.90 57.80h5l-2.5 3z" fill="#444"/><rect x="227.3" y="6.3" width="13.3" height="9.2" rx="0.8" fill="#fff" stroke="#6e7379" stroke-width="1"/><circle cx="240.6" cy="6.3" r="1.2" fill="#fff" stroke="#6e7379" stroke-width=".8"/><circle cx="227.3" cy="15.5" r="1.2" fill="#fff" stroke="#6e7379" stroke-width=".8"/><path d="M248.90 8.70h5l-2.5 3z" fill="#444"/><ellipse cx="269" cy="11.5" rx="7.5" ry="5" fill="#fff" stroke="#555b62" stroke-width="1"/><circle cx="261.5" cy="11.5" r="1" fill="#fff" stroke="#555" stroke-width=".7"/><circle cx="276.5" cy="11.5" r="1" fill="#fff" stroke="#555" stroke-width=".7"/><rect x="268" y="5.8" width="2" height="1.6" fill="#444"/><path d="M289.1 5V17.6M288 16.8H301.7M289.5 12.6C291 8 293.5 7.2 294.8 7.6C297.5 8.4 298 12.5 300.9 13.4" stroke="#6a6f75" stroke-width="1" fill="none"/><path d="M289.1 4.2l-1.3 2h2.6zM302.3 16.8l-2-1.3v2.6z" fill="#6a6f75"/><rect x="320" y="9.9" width="2" height="2" fill="#444"/><path d="M226.6 38.6L240.4 25.7M227.9 40L241.7 27.1" stroke="#4a4f55" stroke-width="1" fill="none"/><path d="M226.9 39.3L241.1 26.7" stroke="#b9bcc0" stroke-width=".8"/><path d="M261.9 26.4H270.2L277 33.6V38.8Q277 39.3 276.5 39.3H261.9Q261.4 39.3 261.4 38.8V26.9Q261.4 26.4 261.9 26.4Z" fill="#fff" stroke="#83878c" stroke-width="1"/><circle cx="267.3" cy="33.6" r="3.1" fill="#fff" stroke="#83878c" stroke-width="1"/><g stroke="#8a9099" stroke-width=".8"><rect x="287.6" y="28.3" width="8.5" height="9" rx="1" fill="#fff"/><rect x="295.6" y="27" width="3.2" height="11.6" fill="#fff"/><rect x="298.4" y="25.4" width="4.4" height="15.1" rx=".8" fill="#fff"/></g><path d="M287.8 32.6H302.8V40.3H298.6V38.4H295.8V37.1H288.6Q287.8 37.1 287.8 36.3Z" fill="#bdd6f2"/><path d="M287.4 32.4H303" stroke="#6fb0f0" stroke-width=".9"/><path d="M316 38.6L324 30.6" stroke="#222" stroke-width="1"/><path d="M325.6 29L324.3 34.3L320.3 30.3Z" fill="#111"/><path d="M227 61.7L240.6 48.2" stroke="#29a5ea" stroke-width="1.3" stroke-dasharray="8 1.2 1.6 1.2" fill="none"/><path d="M248.90 52.60h5l-2.5 3z" fill="#444"/><rect x="263.1" y="49.5" width="11.8" height="10.9" fill="#b4b7ba"/><path d="M263.1 53L266.6 49.5M263.1 57L270.6 49.5M264 60.4L274.9 49.5M268 60.4L274.9 53.5M272 60.4L274.9 57.5" stroke="#8d9094" stroke-width=".7"/><path d="M261.4 49.5H277M261.4 60.4H277M263.1 47.4V62.5M274.9 47.4V62.5" stroke="#6a6e73" stroke-width=".9"/><path d="M270.5 62L276.5 56" stroke="#555" stroke-width="1"/><rect x="287.4" y="50.5" width="9" height="12" fill="#e1e4ec"/><path d="M291 48.6h3.6v2.2l1.8.8 1.7-1.5 2.2 2.4-1.5 1.7.6 1.4h2.6v3.4h-2.6l-.5 1.3 1.2 1.8H288v-5.6l1.2-.9 1.7.3z" fill="#e1e4ec" stroke="#9a9ea6" stroke-width=".9"/><circle cx="291.6" cy="58.3" r="2.7" fill="#fff" stroke="#8d9198" stroke-width=".9"/><circle cx="321.4" cy="55.4" r="6.9" fill="#fff" stroke="#62676e" stroke-width=".9" stroke-dasharray="9 1.5"/><path d="M319.3 54.2H328.2A6.9 6.9 0 0 1 319.3 62Z" fill="#b4def7" stroke="#5aa5dc" stroke-width=".6"/><text x="313.90" y="52.60" font-size="6.4" fill="#222" font-weight="bold">A</text><path d="M351.3 10.9H364.5M357.9 4.3V17.5" stroke="#4a4a4a" stroke-width=".9"/><path d="M350.6 10.9l2-1.3v2.6zM365.2 10.9l-2-1.3v2.6zM357.9 3.6l-1.3 2h2.6zM357.9 18.2l-1.3-2h2.6z" fill="#4a4a4a"/><rect x="356.30" y="9.30" width="3.20" height="3.20" fill="#fff" stroke="#555" stroke-width="0.9"/><rect x="376.2" y="10" width="4.8" height="1.9" fill="#444"/><path d="M384.6 10.9H391.7" stroke="#3f8ae0" stroke-width="1.6" stroke-dasharray="1.6 1"/><path d="M379.1 5.5L385 16.4" stroke="#1565c8" stroke-width="1.2"/><g stroke-width=".9"><rect x="403.4" y="4.4" width="6.4" height="6.4" fill="#c7e5fb" stroke="#62a7e6"/><rect x="410.2" y="4.4" width="6.4" height="6.4" fill="#c7e5fb" stroke="#62a7e6"/><rect x="410.2" y="11.2" width="6.4" height="6.4" fill="#c7e5fb" stroke="#62a7e6"/><rect x="403.4" y="11.6" width="6" height="6" fill="#fff" stroke="#777"/></g><rect x="428.4" y="6.1" width="15.2" height="10.4" rx="1" fill="#fff" stroke="#787d83" stroke-width="1"/><rect x="433.6" y="5" width="4.8" height="2.2" fill="#fff"/><circle cx="432.6" cy="5.9" r="1.1" fill="#1565c8"/><circle cx="439.4" cy="5.9" r="1.1" fill="#1565c8"/><path d="M455.6 6.6L464 15.6" stroke="#f5a80a" stroke-width="3.2"/><path d="M461.6 13L463 14.6" stroke="#f1efe9" stroke-width="3.2"/><path d="M462.9 14.4L464.5 16.2" stroke="#b0481c" stroke-width="3.2"/><path d="M454.3 18.5H462.5M466 18.5H469.4" stroke="#8a8a8a" stroke-width=".8"/><path d="M476.90 8.70h5l-2.5 3z" fill="#444"/><rect x="351.1" y="34.3" width="5.6" height="5.4" rx="1.2" fill="#f7ec12" stroke="#8a8a55" stroke-width=".8"/><rect x="356.4" y="27.8" width="8.4" height="4.6" rx="2.3" fill="#cfe9fb" stroke="#5fa8e6" stroke-width=".8" transform="rotate(-35 360.6 30.1)"/><path d="M359.6 28.3L361.8 32" stroke="#5fa8e6" stroke-width=".6"/><path d="M358.2 38.8H361.6Q362.6 38.8 362.6 37.8V36.2" stroke="#a51d1d" stroke-width=".9" fill="none"/><path d="M362.9 34.6l1.4 2h-2.8z" fill="#a51d1d" transform="rotate(30 362.9 35.6)"/><rect x="376.2" y="32" width="4.8" height="1.9" fill="#444"/><path d="M382 32.9H387.2" stroke="#3f8ae0" stroke-width="1.6" stroke-dasharray="1.6 1"/><path d="M385.4 27.3L391.3 38.6" stroke="#1565c8" stroke-width="1.2"/><path d="M404.9 37.3L408.4 29.2V37.3Z" fill="#fff" stroke="#8a8e93" stroke-width=".8"/><path d="M411.4 29.2L415.4 37.3H411.4Z" fill="#c7e5fb" stroke="#62a7e6" stroke-width=".8"/><rect x="409.1" y="27.3" width="1.7" height="11.3" fill="#aaa"/><rect x="428.4" y="25.4" width="15.2" height="15.2" rx="1" fill="#c7e5fb" stroke="#62a7e6" stroke-width="1"/><rect x="428.4" y="25.4" width="8.3" height="8.2" fill="#fff" stroke="#6a6e73" stroke-width="1"/><rect x="454.5" y="25.4" width="15" height="14" fill="#fff"/><path d="M454.5 39.4V25.4H469.5" stroke="#62b3f3" stroke-width="1" stroke-dasharray="2.4 1.4" fill="none"/><path d="M469.5 25.4V39.4H454.5" stroke="#777c82" stroke-width="1" fill="none"/><path d="M476.90 30.80h5l-2.5 3z" fill="#444"/><path d="M351 56.2H356.4V51.4Q356.4 49.4 358.4 49.4H360.2Q362.2 49.4 362.2 51.4V54.5L364.8 56.4Q365.9 57.6 364.6 59.2L363.4 60.3H351" fill="#fff" stroke="#5a9fe0" stroke-width=".9"/><path d="M351.4 58.2H358.4V52.2Q358.4 51.4 359.2 51.4Q360.2 51.4 360.2 52.2V58.2H363.5" stroke="#6a6e73" stroke-width="1" fill="none"/><path d="M350.6 60.9H363.6" stroke="#4a90d8" stroke-width="1"/><path d="M377 47.6H383.6V62.3H377Q376.4 62.3 376.4 61.7V48.2Q376.4 47.6 377 47.6Z" fill="#e3e3e3" stroke="#777" stroke-width=".9"/><path d="M383.8 47.6H387.2L391.2 62.3H383.8Z" fill="#c7e5fb" stroke="#8cc4f2" stroke-width=".6"/><path d="M380 59.8H386" stroke="#333" stroke-width="1"/><path d="M387.4 59.8l-2-1.4v2.8z" fill="#333"/><path d="M414 50.3A6.3 6.3 0 1 1 408.6 49.2" stroke="#3a3f46" stroke-width="1.4" fill="none"/><path d="M411.8 48.9L407.9 46.9L408.3 51.3Z" fill="#3a3f46"/><circle cx="409.9" cy="55.4" r="1.1" fill="#3a3f46"/><g fill="#cfe9fb" stroke="#4a96dc" stroke-width=".9" stroke-linejoin="round"><path d="M428.6 51.4L432.4 48.8L438.6 48.9L435 51.6Z"/><path d="M428.6 51.4V57.2L431.8 59.8V53.8Z"/><path d="M434.8 54.2H440.4V60.6H434.8Z"/><path d="M434.8 54.2L437.8 51.6H443.4L440.4 54.2Z"/><path d="M440.4 54.2L443.4 51.6V57.8L440.4 60.6Z"/></g><rect x="455.3" y="48.2" width="13.7" height="13.5" fill="#dedfe1" stroke="#777" stroke-width=".9"/><path d="M456 52.5L464.5 61M456 56.5L460.5 61M458 48.8L468.4 59.2M462 48.8L468.4 55.2M466 48.8L468.4 51.2" stroke="#a9acb0" stroke-width=".8"/><path d="M454.3 48.2H470M454.3 61.7H470M455.3 47.2V62.7M469 47.2V62.7" stroke="#777" stroke-width=".6"/><path d="M464.6 56.8L468.6 52.8" stroke="#f3a416" stroke-width="2"/><path d="M463.6 57.9L464.8 56.4L465.3 57Z" fill="#444"/><path d="M476.90 52.90h5l-2.5 3z" fill="#444"/><path d="M503.5 5V32.9M532.5 5V32.9M505 12.6H531" stroke="#3d4752" stroke-width="1.3" fill="none"/><path d="M504.3 12.6l2.6-1.5v3zM531.7 12.6l-2.6-1.5v3z" fill="#3d4752"/><text x="505.0" y="50.2" font-size="13" fill="#444" textLength="26.0">尺寸</text><path d="M514.80 57.80h5l-2.5 3z" fill="#444"/><rect x="546.5" y="8.5" width="27" height="21" fill="#fff" stroke="#222" stroke-width="1"/><path d="M560.5 8.5V29.5M547 19.5H560M553.5 13.6V25.6" stroke="#111" stroke-width="1"/><circle cx="553.5" cy="19.5" r="3.7" fill="none" stroke="#111" stroke-width="1.2"/><text x="562.20" y="24.00" font-size="13.8" fill="#111" font-weight="bold" textLength="9.60" lengthAdjust="spacingAndGlyphs">.1</text><text x="547.0" y="50.2" font-size="13" fill="#444" textLength="26.0">符号</text><path d="M557.00 57.80h5l-2.5 3z" fill="#444"/><text x="585.20" y="17.70" font-size="18.6" fill="#333" textLength="13.20" lengthAdjust="spacingAndGlyphs">A</text><text x="603.0" y="15.0" font-size="13" fill="#444" textLength="26.0">文字</text><path d="M634.20 8.70h5l-2.5 3z" fill="#444"/><rect x="584.2" y="25.6" width="14" height="12.8" fill="#fff" stroke="#9a9da2" stroke-width=".8"/><rect x="584.2" y="25.6" width="14" height="2.6" fill="#8a8e96"/><path d="M584.2 31H598.2M584.2 33.6H598.2M584.2 36H598.2M587.6 28.2V38.4M591 28.2V38.4M594.5 28.2V38.4" stroke="#b5b8bc" stroke-width=".6"/><path d="M592.4 37.4H598.8M595.6 34.2V40.6" stroke="#c8101c" stroke-width="1.5"/><text x="603.0" y="37.2" font-size="13" fill="#444" textLength="26.0">表格</text><path d="M590.8 50V61.6M587.2 58.6H598M590.8 58.6L596.6 52.8M596.6 52.8V58.6M590.8 52.8H596.6" stroke="#50555c" stroke-width=".8" fill="none" stroke-dasharray="2 .8"/><g fill="#3f8ae0"><rect x="589.6" y="49" width="2.4" height="1.6"/><rect x="596.4" y="49" width="2" height="1.6"/><rect x="585.6" y="52.6" width="1.8" height="2.4"/><rect x="585.8" y="58.6" width="1.6" height="2.6"/></g><text x="603.0" y="58.8" font-size="13" fill="#444" textLength="26.0">坐标</text><path d="M634.20 52.80h5l-2.5 3z" fill="#444"/><rect x="666.6" y="8.6" width="28.8" height="23.8" fill="#fff" stroke="#7f9ab8" stroke-width="1"/><path d="M669.6 17.2H672.6M669.6 20.2H672.6M669.6 23.2H672.6M669.6 26.2H672.6M669.6 29.2H672.6" stroke="#5d83ad" stroke-width=".9"/><path d="M674.6 17.2H692.6M674.6 20.2H692.6M674.6 23.2H692.6M674.6 26.2H692.6M674.6 29.2H692.6" stroke="#b9cbe0" stroke-width=".9"/><path d="M694.8 3.2L686.4 11.6" stroke="#f0921e" stroke-width="3.2" stroke-linecap="round"/><path d="M687.4 9.4L689.2 11.2Q686.4 17.6 677.2 17.6Q682.4 15.6 683.6 11.4Z" fill="#8a4b14"/><text x="654.9" y="50.2" font-size="13" fill="#444" textLength="52.0">样式管理</text><path d="M677.90 57.80h5l-2.5 3z" fill="#444"/><g stroke="#9aa0a8" stroke-width=".7" fill="#fff"><path d="M724 14.2L730 12.2L733.4 14.2L727.4 16.4Z"/><path d="M724 17L730 15L733.4 17L727.4 19.2Z"/><path d="M724 19.8L730 17.8L733.4 19.8L727.4 22Z"/></g><rect x="718.4" y="18.6" width="6.2" height="8.2" fill="#eef1f5" stroke="#8f96a0" stroke-width=".7"/><rect x="719.6" y="19.8" width="3.4" height="3.2" fill="#4a86d2"/><path d="M740.90 17.70h5l-2.5 3z" fill="#444"/><path d="M721.2 46.9H731M721.2 49.8H731M721.2 52.7H731" stroke="#333" stroke-width="1.1"/><path d="M740.90 47.60h5l-2.5 3z" fill="#444"/><rect x="749.5" y="9.5" width="123" height="20" fill="#fdfdfd" stroke="#c6c6c6" stroke-width="1"/><rect x="749.5" y="39.5" width="123" height="20" fill="#fdfdfd" stroke="#c6c6c6" stroke-width="1"/><rect x="897.5" y="9.5" width="123" height="20" fill="#fdfdfd" stroke="#c6c6c6" stroke-width="1"/><rect x="897.5" y="39.5" width="123" height="20" fill="#fdfdfd" stroke="#c6c6c6" stroke-width="1"/><path d="M863.00 17.70h5l-2.5 3z" fill="#8a8a8a"/><path d="M863.00 47.60h5l-2.5 3z" fill="#8a8a8a"/><path d="M1010.80 17.70h5l-2.5 3z" fill="#8a8a8a"/><path d="M1010.80 47.60h5l-2.5 3z" fill="#8a8a8a"/><path d="M759.1 12.6C755.9 12.6 754.3 15 754.3 17C754.3 19.4 756.5 20.8 756.9 23.6H761.3C761.7 20.8 763.9 19.4 763.9 17C763.9 15 762.3 12.6 759.1 12.6Z" fill="#fbf3b8" stroke="#333" stroke-width=".9"/><path d="M757 24.2H761.2V26Q759.1 27.8 757 26Z" fill="#333"/><circle cx="776" cy="19.6" r="3.4" fill="#fbf6d8" stroke="#333" stroke-width=".9"/><path d="M776 12.8V14.6M776 24.6V26.4M769.2 19.6H771M781 19.6H782.8M771.2 14.8L772.5 16.1M779.5 23.1L780.8 24.4M771.2 24.4L772.5 23.1M779.5 16.1L780.8 14.8" stroke="#333" stroke-width=".8"/><rect x="785.2" y="18.2" width="8.4" height="6.6" fill="#e8d800" stroke="#222" stroke-width=".8"/><path d="M785.2 20.4H793.6M785.2 22.6H793.6" stroke="#222" stroke-width=".8"/><path d="M790.8 18.2V15.6Q790.8 13.4 793.4 13.4H794.6Q797.2 13.4 797.2 15.6V19.4" stroke="#222" stroke-width="1" fill="none"/><rect x="803.2" y="13.2" width="9.6" height="5" rx="1.4" fill="#fff" stroke="#333" stroke-width=".9"/><rect x="800.2" y="17.2" width="15.4" height="7.4" rx="2.4" fill="#e8e8e8" stroke="#333" stroke-width=".9"/><rect x="803" y="22.4" width="10" height="4.6" fill="#fff" stroke="#333" stroke-width=".9"/><rect x="818.6" y="14.6" width="12.8" height="13" fill="#fff" stroke="#222" stroke-width="1.3"/><svg x="834" y="10" width="20.4" height="19" overflow="hidden"><text x="1.90" y="14.20" font-size="12" fill="#222" textLength="6.00" lengthAdjust="spacingAndGlyphs">5</text><text x="8.2" y="14.4" font-size="13" fill="#222" textLength="13.0">剖</text></svg><text x="817.30" y="53.60" font-size="12.5" fill="#222" textLength="41.00" lengthAdjust="spacingAndGlyphs">ByLayer</text><path d="M754 49.5H813" stroke="#111" stroke-width="1" shape-rendering="crispEdges"/><path d="M883.8 19.5L883.80 12.90A6.6 6.6 0 0 1 889.52 16.20Z" fill="#f22"/><path d="M883.8 19.5L889.52 16.20A6.6 6.6 0 0 1 889.52 22.80Z" fill="#f90"/><path d="M883.8 19.5L889.52 22.80A6.6 6.6 0 0 1 883.80 26.10Z" fill="#fd2"/><path d="M883.8 19.5L883.80 26.10A6.6 6.6 0 0 1 878.08 22.80Z" fill="#3c3"/><path d="M883.8 19.5L878.08 22.80A6.6 6.6 0 0 1 878.08 16.20Z" fill="#28f"/><path d="M883.8 19.5L878.08 16.20A6.6 6.6 0 0 1 883.80 12.90Z" fill="#a3e"/><circle cx="883.8" cy="19.5" r="1.3" fill="#fff" opacity=".85"/><path d="M877.5 45.1H890" stroke="#888" stroke-width=".7"/><path d="M877.5 47.4H890" stroke="#666" stroke-width="1" stroke-dasharray="2 .6"/><path d="M877.5 50H890" stroke="#555" stroke-width="1.5" stroke-dasharray="2 .6"/><path d="M877.5 52.2H890" stroke="#666" stroke-width="1" stroke-dasharray="1 .6"/><path d="M877.5 54.3H890" stroke="#888" stroke-width=".7"/><rect x="905.3" y="13.6" width="11.2" height="11.2" fill="#fff" stroke="#1f78d1" stroke-width="1.2"/><text x="923.40" y="24.00" font-size="12.5" fill="#222" textLength="40.50" lengthAdjust="spacingAndGlyphs">ByLayer</text><path d="M899 50.5H969" stroke="#f01414" stroke-width="1" shape-rendering="crispEdges"/><svg x="970" y="40" width="36" height="19" overflow="hidden"><text x="3.60" y="14.20" font-size="12.5" fill="#222" textLength="41.00" lengthAdjust="spacingAndGlyphs">ByLayer</text></svg><rect x="1044.6" y="6.4" width="21" height="24.6" fill="#c4b9ae" stroke="#2c3138" stroke-width="1.1"/><path d="M1050.2 6.8Q1050.2 4.4 1055 4.4Q1059.8 4.4 1059.8 6.8V8H1050.2Z" fill="#fff" stroke="#2c3138" stroke-width=".9"/><path d="M1046 12.8H1058.4V33.4H1041.4V17.4Z" fill="#fff" stroke="#2c3138" stroke-width="1.1"/><path d="M1041.4 17.4H1046V12.8" fill="none" stroke="#2c3138" stroke-width=".9"/><text x="1040.8" y="50.2" font-size="13" fill="#444" textLength="26.0">粘贴</text><path d="M1050.80 57.80h5l-2.5 3z" fill="#444"/><path d="M1079.6 4.2L1090.6 15.6M1092.6 4.2L1081.6 15.6" stroke="#4a4f55" stroke-width="1.5"/><ellipse cx="1080.9" cy="15.6" rx="2" ry="2.6" transform="rotate(40 1080.9 15.6)" fill="#eee" stroke="#6a6e73" stroke-width=".9"/><ellipse cx="1091.3" cy="15.6" rx="2" ry="2.6" transform="rotate(-40 1091.3 15.6)" fill="#eee" stroke="#6a6e73" stroke-width=".9"/><text x="1097.5" y="15.3" font-size="13" fill="#444" textLength="26.0">剪切</text><path d="M1078.4 25.6H1085.4L1088.2 28.4V37.4H1078.4Z" fill="#fff" stroke="#8f9399" stroke-width=".9"/><path d="M1083.2 29H1090.2L1093.4 32.2V40.4H1083.2Z" fill="#fff" stroke="#8f9399" stroke-width=".9"/><path d="M1090.2 29V32.2H1093.4" fill="none" stroke="#8f9399" stroke-width=".8"/><text x="1097.5" y="37.3" font-size="13" fill="#444" textLength="26.0">复制</text><path d="M1127.90 30.40h5l-2.5 3z" fill="#444"/><rect x="1082.4" y="47" width="10.6" height="15.4" fill="#fff" stroke="#8f9399" stroke-width=".9"/><rect x="1085.6" y="49" width="6.2" height="5.6" fill="#3a7bd0"/><path d="M1085 57H1091M1085 59.4H1091" stroke="#777" stroke-width=".8"/><path d="M1078.4 56.6L1080.8 55.6L1085.4 59.4L1083.4 62.2L1079.8 61.2Z" fill="#b8601c"/><text x="1097.5" y="59.1" font-size="13" fill="#444" textLength="52.0">特性匹配</text></g><g id="doc-tabs"><path d="M34.2 116 L54 96.5 H980 L966 116 Z" fill="#f0f0f0"/><path d="M36 115.5H975" stroke="#fafafa" stroke-width="1"/><path d="M55 97.5 H978" stroke="#f8f8f8" stroke-width="1"/><path d="M34.4 115.8 L54 96.5 H980" fill="none" stroke="#acacac" stroke-width="1"/><path d="M192.1 96 L194.5 99.9 L198.1 96 Z" fill="#e8e8e8"/><path d="M192.3 96.5 L194.5 99.9 L197.9 96.5 M194.5 99.9 V115.6" fill="none" stroke="#acacac" stroke-width="1"/><path d="M406.1 96 L408.5 99.9 L412.1 96 Z" fill="#e8e8e8"/><path d="M406.3 96.5 L408.5 99.9 L411.9 96.5 M408.5 99.9 V115.6" fill="none" stroke="#acacac" stroke-width="1"/><path d="M592.1 96 L594.5 99.9 L598.1 96 Z" fill="#e8e8e8"/><path d="M592.3 96.5 L594.5 99.9 L597.9 96.5 M594.5 99.9 V115.6" fill="none" stroke="#acacac" stroke-width="1"/><path d="M785.1 96 L787.5 99.9 L791.1 96 Z" fill="#e8e8e8"/><path d="M785.3 96.5 L787.5 99.9 L790.9 96.5 M787.5 99.9 V115.6" fill="none" stroke="#acacac" stroke-width="1"/><path d="M965.4 116 L984.3 96.5 H1191.5 Q1193.5 96.5 1193.5 98.5 V116 Z" fill="#fff"/><path d="M965.6 115.8 L984.3 96.5 H1191.5 Q1193.5 96.5 1193.5 98.5 V115.8" fill="none" stroke="#acacac" stroke-width="1"/><text x="70.10" y="110.30" font-size="12" fill="#3f3f3f" textLength="19.20" lengthAdjust="spacingAndGlyphs">Y38</text><text x="89.3" y="110.1" font-size="13" fill="#3f3f3f" textLength="65.0">滚齿机总图</text><text x="154.70" y="110.30" font-size="12" fill="#3f3f3f" textLength="24.80" lengthAdjust="spacingAndGlyphs">.dwg</text><text x="216.20" y="110.30" font-size="12" fill="#3f3f3f" textLength="19.20" lengthAdjust="spacingAndGlyphs">Y38</text><text x="235.4" y="110.1" font-size="13" fill="#3f3f3f" textLength="130.0">滚齿机差动机构装配图</text><text x="365.80" y="110.30" font-size="12" fill="#3f3f3f" textLength="24.80" lengthAdjust="spacingAndGlyphs">.dwg</text><text x="429.20" y="110.30" font-size="12" fill="#3f3f3f" textLength="19.20" lengthAdjust="spacingAndGlyphs">Y38</text><text x="448.4" y="110.1" font-size="13" fill="#3f3f3f" textLength="104.0">滚齿机传动系统图</text><text x="552.80" y="110.30" font-size="12" fill="#3f3f3f" textLength="24.80" lengthAdjust="spacingAndGlyphs">.dwg</text><text x="616.00" y="110.30" font-size="12" fill="#3f3f3f" textLength="19.20" lengthAdjust="spacingAndGlyphs">Y38</text><text x="635.2" y="110.1" font-size="13" fill="#3f3f3f" textLength="104.0">滚齿机床身装配图</text><text x="739.60" y="110.30" font-size="12" fill="#3f3f3f" textLength="31.60" lengthAdjust="spacingAndGlyphs">1.dwg</text><text x="809.20" y="110.30" font-size="12" fill="#3f3f3f" textLength="19.20" lengthAdjust="spacingAndGlyphs">Y38</text><text x="828.4" y="110.1" font-size="13" fill="#3f3f3f" textLength="104.0">滚齿机床身装配图</text><text x="932.80" y="110.30" font-size="12" fill="#3f3f3f" textLength="31.60" lengthAdjust="spacingAndGlyphs">2.dwg</text><text x="999.20" y="110.30" font-size="12" fill="#3c3c3c" font-weight="bold" textLength="20.80" lengthAdjust="spacingAndGlyphs">Y38</text><text x="1020.0" y="110.1" font-size="13.4" fill="#3c3c3c" font-weight="bold" textLength="112.5">滚齿机床身装配图</text><text x="1132.48" y="110.30" font-size="12" fill="#3c3c3c" font-weight="bold" textLength="33.00" lengthAdjust="spacingAndGlyphs">3.dwg</text><path d="M1180.3 103.3L1186.9 109.8M1186.9 103.3L1180.3 109.8" stroke="#555" stroke-width="1.3"/></g><g id="side-tools"><rect x="4.2" y="101" width="5.6" height="42" fill="#d9d9d9"/><rect x="13.8" y="101" width="15.2" height="16.4" fill="#eceadb"/><path d="M14.6 109.6V107Q14.6 103.8 18 103.8H19" stroke="#222" stroke-width="1.1" fill="none"/><path d="M21.2 103.8L18.4 101.4V106.2Z" fill="#222"/><rect x="22.4" y="102.4" width="6.2" height="2" rx="1" fill="#fff" stroke="#444" stroke-width=".9"/><rect x="24.3" y="104.4" width="2.4" height="5" fill="#fff" stroke="#444" stroke-width=".9"/><rect x="14.4" y="111.6" width="13" height="4.8" rx="1.6" fill="#fff" stroke="#444" stroke-width="1.2"/><path d="M16.4 114H23M24.6 114H26" stroke="#777" stroke-width="1"/><path d="M15.2 119.6H26.8M15.2 128.8H26.8M16.6 119.6V128.8M21 119.6V128.8M25.6 119.6V128.8M17.4 126.6L20 121.6M22 126.6L24.8 121.6" stroke="#444" stroke-width="1" fill="none"/><path d="M15.2 132H26.8M15.2 137.2H26.8M18.4 132V141.6M22.4 132V141.6M25.6 132V141.6M16 130.4L17.4 131.6" stroke="#444" stroke-width="1" fill="none"/></g><g id="layout-tabs"><rect x="33.8" y="755.4" width="1302" height="5.6" fill="#cbcbcb"/><path d="M37.2 744V750.6" stroke="#7a7a7a" stroke-width="1.2"/><path d="M42.9 744V750.6L38.3 747.3Z" fill="#7a7a7a"/><path d="M57.9 744V750.6L53.3 747.3Z" fill="#7a7a7a"/><path d="M70.5 744V750.6L75.1 747.3Z" fill="#7a7a7a"/><path d="M85 744V750.6L89.6 747.3Z" fill="#7a7a7a"/><path d="M91.2 744V750.6" stroke="#7a7a7a" stroke-width="1.2"/><path d="M190 738.4L195.4 738.4L243.3 738.4L235.9 754H193.5L187.7 754Z" fill="#eaeaea"/><path d="M243.3 738.4L235.9 754H191.5L188.6 748.6" fill="none" stroke="#8e8e8e" stroke-width="1"/><path d="M147.2 738.4H195.4L187.7 754H143L140.6 749.4Z" fill="#eaeaea"/><path d="M195.4 738.4L187.7 754H143.5L140.8 748.8" fill="none" stroke="#8e8e8e" stroke-width="1"/><path d="M98.9 738.4H147.2L139.4 754H106.7Z" fill="#fff"/><path d="M98.9 738.4L106.7 754H139.4L147.2 738.4" fill="none" stroke="#8e8e8e" stroke-width="1"/><text x="108.4" y="750.2" font-size="13.6" fill="#3a3a3a" font-weight="bold" textLength="27.6">模型</text><text x="151.5" y="750.2" font-size="13" fill="#4a4a4a" textLength="26.0">布局</text><text x="177.60" y="750.20" font-size="12.5" fill="#4a4a4a" textLength="5.60" lengthAdjust="spacingAndGlyphs">1</text><text x="199.7" y="750.2" font-size="13" fill="#4a4a4a" textLength="26.0">布局</text><text x="225.60" y="750.20" font-size="12.5" fill="#4a4a4a" textLength="5.80" lengthAdjust="spacingAndGlyphs">2</text></g></svg></div></body></html>
